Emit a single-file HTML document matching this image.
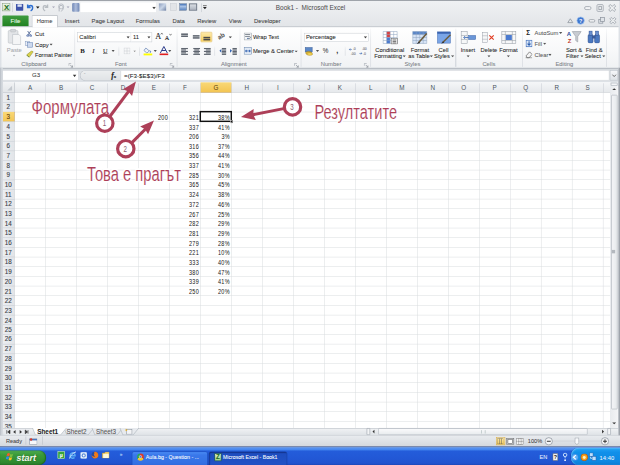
<!DOCTYPE html><html><head><meta charset="utf-8"><style>
html,body{margin:0;padding:0;width:620px;height:465px;overflow:hidden;background:#dde1e6}
#r{position:absolute;left:0;top:0;width:1280px;height:960px;transform:scale(0.484375);transform-origin:0 0;font-family:"Liberation Sans",sans-serif;overflow:hidden}
#r div{box-sizing:border-box;-webkit-text-stroke:0.12px currentColor}

</style></head><body><div id="r">
<div style="position:absolute;left:0.0px;top:0.0px;width:1280.0px;height:960.0px;background:#dde1e6;"></div>
<div style="position:absolute;left:0.0px;top:0.0px;width:1280.0px;height:1.7px;background:#9a9fa6;"></div>
<div style="position:absolute;left:1.7px;top:1.7px;width:1276.2px;height:29.3px;background:linear-gradient(#eff1f3,#e8eaed);"></div>
<div style="position:absolute;left:5.4px;top:6.6px;width:15.9px;height:16.1px;background:linear-gradient(#e9f3e3,#cfe3c6);border:1px solid #7d9a74;box-sizing:border-box;"><div style="position:absolute;left:2px;top:-1px;font:bold 16px Liberation Sans;color:#1f6f1f;line-height:18px">X</div></div>
<div style="position:absolute;left:25.4px;top:6.2px;width:1.0px;height:18.6px;background:#b9bfc7;"></div>
<div style="position:absolute;left:32.6px;top:8.1px;width:15.3px;height:13.8px;background:#3d52a8;border-radius:1px;"><div style="position:absolute;left:3px;top:1px;width:9px;height:5px;background:#dbe3f5"></div></div>
<svg style="position:absolute;left:53.7px;top:6.2px" width="16.5" height="18.6" viewBox="0 0 16 18"><path d="M3 3 L3 9 L9 9 M3 9 C6 4 13 3 13 10 C13 13 11 15 9 16" fill="none" stroke="#2e6fd0" stroke-width="3"/></svg>
<svg style="position:absolute;left:74.3px;top:13.4px" width="8" height="5" viewBox="0 0 8 5"><path d="M0 0 L8 0 L4 5Z" fill="#222"/></svg>
<svg style="position:absolute;left:86.7px;top:6.2px" width="14.5" height="18.6" viewBox="0 0 14 18"><path d="M11 3 L11 9 L5 9 M11 9 C8 4 2 4 2 10 C2 13 4 15 6 16" fill="none" stroke="#b7bcc2" stroke-width="2.5"/></svg>
<svg style="position:absolute;left:106.5px;top:13.4px" width="7" height="4" viewBox="0 0 8 5"><path d="M0 0 L8 0 L4 5Z" fill="#aab"/></svg>
<svg style="position:absolute;left:117.3px;top:5.8px" width="17.5" height="19.6" viewBox="0 0 17 19"><path d="M5 17 L5 8 C5 4 13 4 13 8 L13 12 C13 15 9 15 9 17" fill="none" stroke="#b3b8bf" stroke-width="2"/><circle cx="9" cy="7" r="5" fill="none" stroke="#b3b8bf" stroke-width="1.6"/></svg>
<svg style="position:absolute;left:136.7px;top:13.4px" width="7" height="4" viewBox="0 0 8 5"><path d="M0 0 L8 0 L4 5Z" fill="#aab"/></svg>
<div style="position:absolute;left:148.6px;top:5.8px;width:15.3px;height:17.9px;background:linear-gradient(90deg,#6e86b5,#aebddb,#6e86b5);border-radius:2px;"></div>
<div style="position:absolute;left:166.4px;top:4.7px;width:155.9px;height:20.7px;background:#fff;"></div>
<svg style="position:absolute;left:313.8px;top:14.0px" width="8" height="5" viewBox="0 0 8 5"><path d="M0 0 L8 0 L4 5Z" fill="#444"/></svg>
<div style="position:absolute;left:328.3px;top:7.2px;width:14.4px;height:14.7px;background:linear-gradient(135deg,#8a9cbc,#c8d4e6,#6d80a3);"></div>
<div style="position:absolute;left:351.0px;top:7.2px;width:14.4px;height:14.7px;background:#e2e4e7;border:1px solid #c8ccd1;box-sizing:border-box;"></div>
<div style="position:absolute;left:369.5px;top:7.2px;width:16.6px;height:14.7px;background:linear-gradient(#3f6fb5,#a9c2e6 40%,#5a84c0);border:1px solid #5a6f90;box-sizing:border-box;"></div>
<div style="position:absolute;left:390.2px;top:7.2px;width:16.5px;height:14.7px;background:linear-gradient(#d9dde3,#aeb5bf);border:2px solid #6d7684;box-sizing:border-box;"></div>
<div style="position:absolute;left:414.6px;top:7.2px;width:1.0px;height:17.6px;background:#b7bdc5;"></div>
<svg style="position:absolute;left:419.1px;top:11.4px" width="8" height="9" viewBox="0 0 8 9"><rect x="0" y="0" width="8" height="1.6" fill="#222"/><path d="M0 3.5 L8 3.5 L4 8Z" fill="#222"/></svg>
<div style="position:absolute;left:569.4px;top:7.7px;line-height:15.96px;font-size:13.3px;color:#4a4a4a;white-space:nowrap;-webkit-text-stroke:0">Book1 -&nbsp; Microsoft Excel</div>
<svg style="position:absolute;left:0;top:0;z-index:5" width="1280" height="70" viewBox="0 0 1280 70"><rect x="1206.9" y="13.6" width="13.2" height="6.2" rx="3" fill="#f3f4f6" stroke="#9aa1aa" stroke-width="1.6"/><rect x="1232.5" y="9.5" width="12.8" height="14.0" rx="2" fill="#eef0f2" stroke="#9aa1aa" stroke-width="1.6"/><rect x="1236.4" y="13.0" width="5.0" height="7.0" fill="none" stroke="#8a919a" stroke-width="1.4"/><path d="M1256.7 12.5 L1259.9 9.3 L1263.9 13.3 L1267.9 9.3 L1271.1 12.5 L1267.1 16.5 L1271.1 20.5 L1267.9 23.7 L1263.9 19.7 L1259.9 23.7 L1256.7 20.5 L1260.7 16.5Z" fill="#eef0f2" stroke="#8f969f" stroke-width="1.5"/><path d="M1172.2 46.7 L1177.4 38.8 L1182.6 46.7Z" fill="none" stroke="#8e959e" stroke-width="1.6"/><circle cx="1198.7" cy="42.5" r="7.6" fill="#3f77cf" stroke="#a7c6ef" stroke-width="1.5"/><text x="1198.7" y="46.5" font-size="11" font-weight="bold" fill="#fff" text-anchor="middle" font-family="Liberation Sans">?</text><rect x="1216.0" y="40.5" width="12.0" height="5.0" rx="2.5" fill="#f3f4f6" stroke="#8f969f" stroke-width="1.5"/><rect x="1236.2" y="40.1" width="8.3" height="7.8" fill="#dfe3e8" stroke="#8f969f" stroke-width="1.5"/><rect x="1239.9" y="36.3" width="8.3" height="7.8" fill="#dfe3e8" stroke="#8f969f" stroke-width="1.5"/><path d="M1258.9 39.0 L1261.8 36.1 L1265.3 39.6 L1268.8 36.1 L1271.7 39.0 L1268.2 42.5 L1271.7 46.0 L1268.8 48.9 L1265.3 45.4 L1261.8 48.9 L1258.9 46.0 L1262.4 42.5Z" fill="#eef0f2" stroke="#8f969f" stroke-width="1.4"/></svg>
<div style="position:absolute;left:1.7px;top:31.0px;width:1276.2px;height:24.7px;background:linear-gradient(#e8eaed,#e2e5e8);"></div>
<div style="position:absolute;left:4.7px;top:32.0px;width:54.6px;height:23.3px;background:linear-gradient(#3f9c3f,#208020);border-radius:2px 2px 0 0;"></div>
<div style="position:absolute;left:-268.0px;width:600px;text-align:center;top:36.5px;line-height:15.0px;font-size:12.5px;color:#f2fff2;white-space:nowrap;">File</div>
<div style="position:absolute;left:65.0px;top:31.4px;width:54.7px;height:25.6px;z-index:2;background:linear-gradient(#ffffff,#fdfdfe);border:2px solid #c6cacf;border-bottom:none;border-radius:3px 3px 0 0;box-sizing:border-box;"></div>
<div style="position:absolute;left:-207.9px;width:600px;text-align:center;top:37.0px;line-height:14.399999999999999px;font-size:12px;color:#3c3c3c;white-space:nowrap;z-index:3;">Home</div>
<div style="position:absolute;left:-151.4px;width:600px;text-align:center;top:37.0px;line-height:14.399999999999999px;font-size:12px;color:#3c3c3c;white-space:nowrap;z-index:3;">Insert</div>
<div style="position:absolute;left:-77.3px;width:600px;text-align:center;top:37.0px;line-height:14.399999999999999px;font-size:12px;color:#3c3c3c;white-space:nowrap;z-index:3;">Page Layout</div>
<div style="position:absolute;left:5.3px;width:600px;text-align:center;top:37.0px;line-height:14.399999999999999px;font-size:12px;color:#3c3c3c;white-space:nowrap;z-index:3;">Formulas</div>
<div style="position:absolute;left:68.9px;width:600px;text-align:center;top:37.0px;line-height:14.399999999999999px;font-size:12px;color:#3c3c3c;white-space:nowrap;z-index:3;">Data</div>
<div style="position:absolute;left:126.8px;width:600px;text-align:center;top:37.0px;line-height:14.399999999999999px;font-size:12px;color:#3c3c3c;white-space:nowrap;z-index:3;">Review</div>
<div style="position:absolute;left:185.4px;width:600px;text-align:center;top:37.0px;line-height:14.399999999999999px;font-size:12px;color:#3c3c3c;white-space:nowrap;z-index:3;">View</div>
<div style="position:absolute;left:251.9px;width:600px;text-align:center;top:37.0px;line-height:14.399999999999999px;font-size:12px;color:#3c3c3c;white-space:nowrap;z-index:3;">Developer</div>
<div style="position:absolute;left:3.1px;top:54.3px;width:1273.8px;height:85.5px;background:linear-gradient(#ffffff,#f7f8f9 60%,#f0f2f4);border-top:2px solid #c6cacf;box-sizing:border-box;"></div>
<div style="position:absolute;left:0.0px;top:139.8px;width:1280.0px;height:3.7px;background:#b9bec5;"></div>
<svg style="position:absolute;left:14.9px;top:58.8px" width="28.9" height="34.1" viewBox="0 0 29 34"><rect x="2" y="4" width="20" height="26" rx="2" fill="#e3e5e8" stroke="#c3c7cc" stroke-width="1.5"/><rect x="7" y="1" width="10" height="6" rx="1" fill="#d3d6da" stroke="#b9bdc2"/><path d="M11 12 L24 12 L28 16 L28 33 L11 33Z" fill="#f4f5f6" stroke="#c1c5ca" stroke-width="1.5"/></svg>
<div style="position:absolute;left:-270.7px;width:600px;text-align:center;top:96.4px;line-height:14.399999999999999px;font-size:12px;color:#a5a8ad;white-space:nowrap;">Paste</div>
<svg style="position:absolute;left:25.9px;top:113.2px" width="6" height="3.5" viewBox="0 0 8 5"><path d="M0 0 L8 0 L4 5Z" fill="#b0b3b8"/></svg>
<svg style="position:absolute;left:53.7px;top:63.0px" width="12.4" height="13.4" viewBox="0 0 12 13"><path d="M3 1 L9 10 M9 1 L3 10" stroke="#5a6f98" stroke-width="1.8"/><circle cx="3" cy="10.5" r="2" fill="none" stroke="#3a5aa0" stroke-width="1.5"/><circle cx="9" cy="10.5" r="2" fill="none" stroke="#3a5aa0" stroke-width="1.5"/></svg>
<div style="position:absolute;left:72.3px;top:62.6px;line-height:14.399999999999999px;font-size:12px;color:#262626;white-space:nowrap;">Cut</div>
<svg style="position:absolute;left:51.2px;top:84.2px" width="17.5" height="14.5" viewBox="0 0 17 14"><rect x="1" y="1" width="9" height="9" fill="#e8eef8" stroke="#7d93b8"/><rect x="6" y="4" width="10" height="9" fill="#cdd9ee" stroke="#5f7fb2"/></svg>
<div style="position:absolute;left:72.3px;top:84.5px;line-height:14.399999999999999px;font-size:12px;color:#262626;white-space:nowrap;">Copy</div>
<svg style="position:absolute;left:101.8px;top:89.8px" width="7" height="4.5" viewBox="0 0 8 5"><path d="M0 0 L8 0 L4 5Z" fill="#555"/></svg>
<svg style="position:absolute;left:53.3px;top:104.3px" width="16.5" height="16.5" viewBox="0 0 16 16"><path d="M2 9 L7 14 L15 3 L12 1Z" fill="#d9d24a" stroke="#8a8a30" stroke-width="1"/><path d="M3 10 L6 13" stroke="#5a7a30" stroke-width="2"/></svg>
<div style="position:absolute;left:72.3px;top:107.0px;line-height:13.92px;font-size:11.6px;color:#262626;white-space:nowrap;">Format Painter</div>
<div style="position:absolute;left:-230.2px;width:600px;text-align:center;top:125.8px;line-height:14.399999999999999px;font-size:12px;color:#7b7f86;white-space:nowrap;">Clipboard</div>
<svg style="position:absolute;left:140.5px;top:129.6px" width="10" height="10" viewBox="0 0 10 10"><path d="M1 1 L6 1 M1 1 L1 6" stroke="#9aa0a8" stroke-width="1.2" fill="none"/><path d="M4 4 L9 9 M9 5 L9 9 L5 9" stroke="#7a818a" stroke-width="1.3" fill="none"/></svg>
<div style="position:absolute;left:153.8px;top:58.8px;width:1.2px;height:79.5px;background:linear-gradient(rgba(200,205,212,0.2),#d3d7dd 30%,#c9ced5);"></div>
<div style="position:absolute;left:159.6px;top:66.7px;width:111.5px;height:20.8px;background:#fff;border:1px solid #c6cbd1;"></div>
<div style="position:absolute;left:271.1px;top:66.7px;width:42.7px;height:20.8px;background:#fff;border:1px solid #c6cbd1;border-left:none;"></div>
<div style="position:absolute;left:163.7px;top:69.8px;line-height:14.399999999999999px;font-size:12px;color:#262626;white-space:nowrap;">Calibri</div>
<svg style="position:absolute;left:261.2px;top:75.2px" width="7" height="4.5" viewBox="0 0 8 5"><path d="M0 0 L8 0 L4 5Z" fill="#444"/></svg>
<div style="position:absolute;left:274.6px;top:69.8px;line-height:14.399999999999999px;font-size:12px;color:#262626;white-space:nowrap;">11</div>
<svg style="position:absolute;left:304.1px;top:75.2px" width="7" height="4.5" viewBox="0 0 8 5"><path d="M0 0 L8 0 L4 5Z" fill="#444"/></svg>
<div style="position:absolute;left:320.4px;top:66.5px;font-size:17px;line-height:18px;color:#222;font-family:Liberation Serif;-webkit-text-stroke:0.2px">A</div>
<svg style="position:absolute;left:330.9px;top:67.3px" width="6" height="5" viewBox="0 0 6 5"><path d="M0.5 4.5 L3 1 L5.5 4.5" stroke="#333" stroke-width="1.2" fill="none"/></svg>
<div style="position:absolute;left:340.2px;top:71.8px;font-size:13px;line-height:14px;color:#222;font-family:Liberation Serif;-webkit-text-stroke:0.2px">A</div>
<svg style="position:absolute;left:348.9px;top:68.5px" width="6" height="5" viewBox="0 0 6 5"><path d="M0.5 0.5 L3 4 L5.5 0.5" stroke="#333" stroke-width="1.2" fill="none"/></svg>
<div style="position:absolute;left:165.8px;top:96.5px;line-height:16.8px;font-size:14px;color:#222;white-space:nowrap;font-family:Liberation Serif"><b>B</b></div>
<div style="position:absolute;left:190.6px;top:96.5px;line-height:16.8px;font-size:14px;color:#222;white-space:nowrap;font-family:Liberation Serif"><i>I</i></div>
<div style="position:absolute;left:212.6px;top:97.1px;line-height:15.6px;font-size:13px;color:#222;white-space:nowrap;font-family:Liberation Serif"><u>U</u></div>
<svg style="position:absolute;left:229.8px;top:103.0px" width="7" height="4.5" viewBox="0 0 8 5"><path d="M0 0 L8 0 L4 5Z" fill="#555"/></svg>
<div style="position:absolute;left:244.6px;top:96.0px;width:1.3px;height:18.6px;background:linear-gradient(rgba(200,205,212,0.2),#d3d7dd 30%,#c9ced5);"></div>
<svg style="position:absolute;left:254.6px;top:97.7px" width="14.5" height="14.5" viewBox="0 0 14 14"><rect x="1" y="1" width="12" height="12" fill="none" stroke="#c4c8cd" stroke-width="1"/><path d="M7 1 L7 13 M1 7 L13 7" stroke="#c4c8cd"/></svg>
<svg style="position:absolute;left:274.7px;top:103.5px" width="6" height="3.5" viewBox="0 0 8 5"><path d="M0 0 L8 0 L4 5Z" fill="#666"/></svg>
<div style="position:absolute;left:288.0px;top:96.0px;width:1.2px;height:18.6px;background:linear-gradient(rgba(200,205,212,0.2),#d3d7dd 30%,#c9ced5);"></div>
<svg style="position:absolute;left:296.3px;top:96.0px" width="18.6" height="18.6" viewBox="0 0 18 18"><path d="M5 3 L12 9 L7 13 L1 8Z" fill="#eef2f8" stroke="#5c7cb0" stroke-width="1.3"/><path d="M13 8 C15 10 15 12 13 12" stroke="#3a6ab8" stroke-width="1.8" fill="none"/><rect x="0" y="14" width="18" height="4" fill="#ffff00"/></svg>
<svg style="position:absolute;left:316.9px;top:103.0px" width="7" height="4.5" viewBox="0 0 8 5"><path d="M0 0 L8 0 L4 5Z" fill="#555"/></svg>
<svg style="position:absolute;left:329.3px;top:94.6px" width="18.6" height="19.6" viewBox="0 0 18 19"><path d="M2 14 L9 1 L16 14 M5 9 L13 9" stroke="#2a3a8a" stroke-width="2" fill="none"/><rect x="0" y="15" width="18" height="4" fill="#e02020"/></svg>
<svg style="position:absolute;left:346.6px;top:103.0px" width="7" height="4.5" viewBox="0 0 8 5"><path d="M0 0 L8 0 L4 5Z" fill="#555"/></svg>
<div style="position:absolute;left:-50.6px;width:600px;text-align:center;top:125.8px;line-height:14.399999999999999px;font-size:12px;color:#7b7f86;white-space:nowrap;">Font</div>
<svg style="position:absolute;left:349.7px;top:129.6px" width="10" height="10" viewBox="0 0 10 10"><path d="M1 1 L6 1 M1 1 L1 6" stroke="#9aa0a8" stroke-width="1.2" fill="none"/><path d="M4 4 L9 9 M9 5 L9 9 L5 9" stroke="#7a818a" stroke-width="1.3" fill="none"/></svg>
<div style="position:absolute;left:364.8px;top:58.8px;width:1.2px;height:79.5px;background:linear-gradient(rgba(200,205,212,0.2),#d3d7dd 30%,#c9ced5);"></div>
<div style="position:absolute;left:414.3px;top:65.7px;width:23.8px;height:21.4px;background:linear-gradient(#fde9a8,#f8cf5e);border:1px solid #e0b548;border-radius:2px;"></div>
<svg style="position:absolute;left:373.3px;top:68.1px" width="16" height="16" viewBox="0 0 16 16"><rect x="1" y="1" width="14" height="3.2" fill="#5f6670"/><rect x="1" y="5.2" width="14" height="3.2" fill="#5f6670"/></svg>
<svg style="position:absolute;left:397.2px;top:69.0px" width="16" height="16" viewBox="0 0 16 16"><rect x="1" y="3.5" width="14" height="3.2" fill="#5f6670"/><rect x="1" y="7.7" width="14" height="3.2" fill="#5f6670"/></svg>
<svg style="position:absolute;left:418.7px;top:69.4px" width="16" height="16" viewBox="0 0 16 16"><rect x="1" y="7" width="14" height="3.2" fill="#4a4a4a"/><rect x="1" y="11.2" width="14" height="3.2" fill="#4a4a4a"/></svg>
<div style="position:absolute;left:449.0px;top:67.1px;font-size:13px;line-height:16px;color:#555;transform:rotate(-30deg);font-weight:bold">ab</div>
<svg style="position:absolute;left:472.2px;top:74.5px" width="7" height="4.5" viewBox="0 0 8 5"><path d="M0 0 L8 0 L4 5Z" fill="#555"/></svg>
<svg style="position:absolute;left:373.3px;top:97.9px" width="16" height="16" viewBox="0 0 16 16"><rect x="1" y="1" width="14" height="2.4" fill="#5f6670"/><rect x="1" y="4" width="10" height="2.4" fill="#5f6670"/><rect x="1" y="7" width="14" height="2.4" fill="#5f6670"/><rect x="1" y="10" width="10" height="2.4" fill="#5f6670"/><rect x="1" y="13" width="14" height="2.4" fill="#5f6670"/></svg>
<svg style="position:absolute;left:397.6px;top:97.9px" width="16" height="16" viewBox="0 0 16 16"><rect x="1" y="1" width="14" height="2.4" fill="#5f6670"/><rect x="3" y="4" width="10" height="2.4" fill="#5f6670"/><rect x="1" y="7" width="14" height="2.4" fill="#5f6670"/><rect x="3" y="10" width="10" height="2.4" fill="#5f6670"/><rect x="1" y="13" width="14" height="2.4" fill="#5f6670"/></svg>
<svg style="position:absolute;left:420.3px;top:97.9px" width="16" height="16" viewBox="0 0 16 16"><rect x="1" y="1" width="14" height="2.4" fill="#5f6670"/><rect x="5" y="4" width="10" height="2.4" fill="#5f6670"/><rect x="1" y="7" width="14" height="2.4" fill="#5f6670"/><rect x="5" y="10" width="10" height="2.4" fill="#5f6670"/><rect x="1" y="13" width="14" height="2.4" fill="#5f6670"/></svg>
<div style="position:absolute;left:443.0px;top:96.0px;width:1.3px;height:18.6px;background:linear-gradient(rgba(200,205,212,0.2),#d3d7dd 30%,#c9ced5);"></div>
<svg style="position:absolute;left:451.7px;top:97.9px" width="16" height="16" viewBox="0 0 16 16"><rect x="6" y="1" width="9" height="2.4" fill="#5f6670"/><rect x="6" y="4" width="9" height="2.4" fill="#5f6670"/><rect x="6" y="7" width="9" height="2.4" fill="#5f6670"/><rect x="6" y="10" width="9" height="2.4" fill="#5f6670"/><rect x="6" y="13" width="9" height="2.4" fill="#5f6670"/></svg>
<svg style="position:absolute;left:451.7px;top:100.1px" width="6" height="10" viewBox="0 0 6 10"><path d="M5 1 L1 5 L5 9Z" fill="#2d5fae"/></svg>
<svg style="position:absolute;left:474.4px;top:97.9px" width="16" height="16" viewBox="0 0 16 16"><rect x="6" y="1" width="9" height="2.4" fill="#5f6670"/><rect x="6" y="4" width="9" height="2.4" fill="#5f6670"/><rect x="6" y="7" width="9" height="2.4" fill="#5f6670"/><rect x="6" y="10" width="9" height="2.4" fill="#5f6670"/><rect x="6" y="13" width="9" height="2.4" fill="#5f6670"/></svg>
<svg style="position:absolute;left:474.4px;top:100.1px" width="6" height="10" viewBox="0 0 6 10"><path d="M1 1 L5 5 L1 9Z" fill="#2d5fae"/></svg>
<div style="position:absolute;left:494.5px;top:58.8px;width:1.2px;height:79.5px;background:linear-gradient(rgba(200,205,212,0.2),#d3d7dd 30%,#c9ced5);"></div>
<svg style="position:absolute;left:503.3px;top:67.3px" width="17.5" height="16.5" viewBox="0 0 17 16"><rect x="1" y="1" width="15" height="14" fill="#f4f6f8" stroke="#8f979f"/><path d="M3 4 L13 4 M3 8 L12 8 C14 8 14 12 12 12 L8 12" stroke="#5a6470" stroke-width="1.5" fill="none"/><path d="M9 10 L7 12 L9 14Z" fill="#2d5fae"/></svg>
<div style="position:absolute;left:522.3px;top:68.8px;line-height:14.399999999999999px;font-size:12px;color:#262626;white-space:nowrap;">Wrap Text</div>
<svg style="position:absolute;left:503.3px;top:96.6px" width="17.5" height="16.5" viewBox="0 0 17 16"><rect x="1" y="1" width="15" height="14" fill="#dfe8f4" stroke="#5f7fa8"/><path d="M3 8 L14 8" stroke="#2d5fae" stroke-width="1.5"/><path d="M3 8 L6 5 L6 11Z M14 8 L11 5 L11 11Z" fill="#2d5fae"/></svg>
<div style="position:absolute;left:522.3px;top:98.1px;line-height:14.399999999999999px;font-size:12px;color:#262626;white-space:nowrap;">Merge &amp; Center</div>
<svg style="position:absolute;left:607.6px;top:103.5px" width="7" height="4.5" viewBox="0 0 8 5"><path d="M0 0 L8 0 L4 5Z" fill="#555"/></svg>
<div style="position:absolute;left:182.7px;width:600px;text-align:center;top:125.8px;line-height:14.399999999999999px;font-size:12px;color:#7b7f86;white-space:nowrap;">Alignment</div>
<svg style="position:absolute;left:606.5px;top:129.6px" width="10" height="10" viewBox="0 0 10 10"><path d="M1 1 L6 1 M1 1 L1 6" stroke="#9aa0a8" stroke-width="1.2" fill="none"/><path d="M4 4 L9 9 M9 5 L9 9 L5 9" stroke="#7a818a" stroke-width="1.3" fill="none"/></svg>
<div style="position:absolute;left:620.6px;top:58.8px;width:1.2px;height:79.5px;background:linear-gradient(rgba(200,205,212,0.2),#d3d7dd 30%,#c9ced5);"></div>
<div style="position:absolute;left:627.6px;top:67.9px;width:133.0px;height:18.6px;background:#fff;border:1px solid #c6cbd1;"></div>
<div style="position:absolute;left:631.7px;top:69.8px;line-height:14.399999999999999px;font-size:12px;color:#262626;white-space:nowrap;">Percentage</div>
<svg style="position:absolute;left:751.3px;top:75.2px" width="7" height="4.5" viewBox="0 0 8 5"><path d="M0 0 L8 0 L4 5Z" fill="#444"/></svg>
<svg style="position:absolute;left:629.3px;top:96.0px" width="19.6" height="18.6" viewBox="0 0 19 18"><rect x="1" y="2" width="14" height="9" fill="#5b87c6" stroke="#3a5f98"/><ellipse cx="8" cy="13" rx="6" ry="3" fill="#e8c340" stroke="#a5821a"/><ellipse cx="10" cy="15" rx="6" ry="3" fill="#f0d050" stroke="#a5821a"/></svg>
<svg style="position:absolute;left:651.8px;top:103.0px" width="7" height="4.5" viewBox="0 0 8 5"><path d="M0 0 L8 0 L4 5Z" fill="#555"/></svg>
<div style="position:absolute;left:666.4px;top:97.5px;line-height:15.6px;font-size:13px;color:#444;white-space:nowrap;">%</div>
<div style="position:absolute;left:694.1px;top:96.3px;line-height:18.0px;font-size:15px;color:#333;white-space:nowrap;"><b>,</b></div>
<div style="position:absolute;left:712.3px;top:96.0px;width:1.2px;height:18.6px;background:linear-gradient(rgba(200,205,212,0.2),#d3d7dd 30%,#c9ced5);"></div>
<svg style="position:absolute;left:719.5px;top:96.6px" width="18.6" height="17.5" viewBox="0 0 18 17"><text x="8" y="7" font-size="7" fill="#444" font-family="Liberation Sans">.0</text><text x="4" y="16" font-size="7" fill="#444" font-family="Liberation Sans">.00</text><path d="M1 5 L6 5 M1 5 L3 3 M1 5 L3 7" stroke="#2d5fae" stroke-width="1.2" fill="none"/></svg>
<svg style="position:absolute;left:741.2px;top:96.6px" width="18.6" height="17.5" viewBox="0 0 18 17"><text x="6" y="7" font-size="7" fill="#444" font-family="Liberation Sans">.00</text><text x="8" y="16" font-size="7" fill="#444" font-family="Liberation Sans">.0</text><path d="M1 13 L6 13 M6 13 L4 11 M6 13 L4 15" stroke="#2d5fae" stroke-width="1.2" fill="none"/></svg>
<div style="position:absolute;left:383.4px;width:600px;text-align:center;top:125.8px;line-height:14.399999999999999px;font-size:12px;color:#7b7f86;white-space:nowrap;">Number</div>
<svg style="position:absolute;left:750.6px;top:129.6px" width="10" height="10" viewBox="0 0 10 10"><path d="M1 1 L6 1 M1 1 L1 6" stroke="#9aa0a8" stroke-width="1.2" fill="none"/><path d="M4 4 L9 9 M9 5 L9 9 L5 9" stroke="#7a818a" stroke-width="1.3" fill="none"/></svg>
<div style="position:absolute;left:765.1px;top:58.8px;width:1.2px;height:79.5px;background:linear-gradient(rgba(200,205,212,0.2),#d3d7dd 30%,#c9ced5);"></div>
<svg style="position:absolute;left:788.6px;top:63.2px" width="33.0" height="28.9" viewBox="0 0 32 28"><rect x="2" y="2" width="28" height="24" fill="#fff"/><rect x="9" y="2" width="7" height="12" fill="#d94040"/><rect x="9" y="14" width="7" height="12" fill="#4a7ad0"/><path d="M2 2 L30 2" stroke="#8ea3c0" stroke-width="1"/><path d="M2 8 L30 8" stroke="#8ea3c0" stroke-width="1"/><path d="M2 14 L30 14" stroke="#8ea3c0" stroke-width="1"/><path d="M2 20 L30 20" stroke="#8ea3c0" stroke-width="1"/><path d="M2 26 L30 26" stroke="#8ea3c0" stroke-width="1"/><path d="M2 2 L2 26" stroke="#8ea3c0" stroke-width="1"/><path d="M9 2 L9 26" stroke="#8ea3c0" stroke-width="1"/><path d="M16 2 L16 26" stroke="#8ea3c0" stroke-width="1"/><path d="M23 2 L23 26" stroke="#8ea3c0" stroke-width="1"/><path d="M30 2 L30 26" stroke="#8ea3c0" stroke-width="1"/><rect x="18" y="16" width="13" height="11" fill="#eee" stroke="#555"/><path d="M21 19 L28 19 M21 22 L28 22 M21 25 L28 25" stroke="#333" stroke-width="1.2"/></svg>
<div style="position:absolute;left:504.7px;width:600px;text-align:center;top:95.6px;line-height:14.399999999999999px;font-size:12px;color:#262626;white-space:nowrap;">Conditional</div>
<div style="position:absolute;left:501.4px;width:600px;text-align:center;top:108.8px;line-height:14.399999999999999px;font-size:12px;color:#262626;white-space:nowrap;">Formatting</div>
<svg style="position:absolute;left:830.6px;top:114.2px" width="7" height="4.5" viewBox="0 0 8 5"><path d="M0 0 L8 0 L4 5Z" fill="#555"/></svg>
<svg style="position:absolute;left:848.5px;top:63.2px" width="35.1" height="28.9" viewBox="0 0 32 28"><rect x="2" y="2" width="28" height="24" fill="#d6e3f5"/><rect x="2" y="2" width="28" height="6" fill="#5a86c8"/><path d="M2 2 L30 2" stroke="#8ea3c0" stroke-width="1"/><path d="M2 8 L30 8" stroke="#8ea3c0" stroke-width="1"/><path d="M2 14 L30 14" stroke="#8ea3c0" stroke-width="1"/><path d="M2 20 L30 20" stroke="#8ea3c0" stroke-width="1"/><path d="M2 26 L30 26" stroke="#8ea3c0" stroke-width="1"/><path d="M2 2 L2 26" stroke="#8ea3c0" stroke-width="1"/><path d="M9 2 L9 26" stroke="#8ea3c0" stroke-width="1"/><path d="M16 2 L16 26" stroke="#8ea3c0" stroke-width="1"/><path d="M23 2 L23 26" stroke="#8ea3c0" stroke-width="1"/><path d="M30 2 L30 26" stroke="#8ea3c0" stroke-width="1"/><path d="M30 6 L14 24" stroke="#6a5a3a" stroke-width="3"/><path d="M14 22 L10 27 L17 25Z" fill="#333"/></svg>
<div style="position:absolute;left:567.1px;width:600px;text-align:center;top:95.6px;line-height:14.399999999999999px;font-size:12px;color:#262626;white-space:nowrap;">Format</div>
<div style="position:absolute;left:565.0px;width:600px;text-align:center;top:108.8px;line-height:14.399999999999999px;font-size:12px;color:#262626;white-space:nowrap;">as Table</div>
<svg style="position:absolute;left:887.1px;top:114.2px" width="7" height="4.5" viewBox="0 0 8 5"><path d="M0 0 L8 0 L4 5Z" fill="#555"/></svg>
<svg style="position:absolute;left:900.7px;top:63.2px" width="31.0" height="28.9" viewBox="0 0 32 28"><rect x="2" y="2" width="28" height="24" fill="#7aa5e6" stroke="#4a6fb0"/><rect x="2" y="2" width="28" height="4" fill="#3a64b0"/><path d="M30 8 L14 24" stroke="#6a5a3a" stroke-width="3"/><path d="M14 22 L10 27 L17 25Z" fill="#333"/></svg>
<div style="position:absolute;left:615.6px;width:600px;text-align:center;top:95.6px;line-height:14.399999999999999px;font-size:12px;color:#262626;white-space:nowrap;">Cell</div>
<div style="position:absolute;left:612.5px;width:600px;text-align:center;top:108.8px;line-height:14.399999999999999px;font-size:12px;color:#262626;white-space:nowrap;">Styles</div>
<svg style="position:absolute;left:930.5px;top:114.2px" width="7" height="4.5" viewBox="0 0 8 5"><path d="M0 0 L8 0 L4 5Z" fill="#555"/></svg>
<div style="position:absolute;left:551.4px;width:600px;text-align:center;top:125.8px;line-height:14.399999999999999px;font-size:12px;color:#7b7f86;white-space:nowrap;">Styles</div>
<div style="position:absolute;left:940.4px;top:58.8px;width:1.2px;height:79.5px;background:linear-gradient(rgba(200,205,212,0.2),#d3d7dd 30%,#c9ced5);"></div>
<svg style="position:absolute;left:949.7px;top:63.2px" width="33.0" height="28.9" viewBox="0 0 32 28"><rect x="2" y="2" width="12" height="24" fill="#f6f7f8" stroke="#8d95a0"/><path d="M2 10 L14 10 M2 18 L14 18" stroke="#8d95a0"/><rect x="17" y="10" width="14" height="8" fill="#6a96d8" stroke="#3a64a8"/><path d="M17 14 L8 14 M10 11 L7 14 L10 17" stroke="#2d5fae" stroke-width="1.5" fill="none"/></svg>
<div style="position:absolute;left:666.0px;width:600px;text-align:center;top:95.6px;line-height:14.399999999999999px;font-size:12px;color:#262626;white-space:nowrap;">Insert</div>
<svg style="position:absolute;left:962.5px;top:114.2px" width="7" height="4.5" viewBox="0 0 8 5"><path d="M0 0 L8 0 L4 5Z" fill="#555"/></svg>
<svg style="position:absolute;left:993.9px;top:63.2px" width="28.9" height="28.9" viewBox="0 0 32 28"><rect x="2" y="2" width="12" height="24" fill="#f6f7f8" stroke="#8d95a0"/><path d="M2 10 L14 10 M2 18 L14 18" stroke="#8d95a0"/><path d="M18 9 L28 19 M28 9 L18 19" stroke="#e03a20" stroke-width="2.5"/></svg>
<div style="position:absolute;left:709.3px;width:600px;text-align:center;top:95.6px;line-height:14.399999999999999px;font-size:12px;color:#262626;white-space:nowrap;">Delete</div>
<svg style="position:absolute;left:1005.8px;top:114.2px" width="7" height="4.5" viewBox="0 0 8 5"><path d="M0 0 L8 0 L4 5Z" fill="#555"/></svg>
<svg style="position:absolute;left:1033.5px;top:63.2px" width="33.0" height="28.9" viewBox="0 0 32 28"><rect x="2" y="2" width="28" height="24" fill="#f6f7f8" stroke="#8d95a0"/><path d="M2 8 L30 8 M2 20 L30 20 M9 2 L9 26 M23 2 L23 26" stroke="#8d95a0"/><rect x="10" y="9" width="12" height="10" fill="#4a7ad0"/></svg>
<div style="position:absolute;left:749.8px;width:600px;text-align:center;top:95.6px;line-height:14.399999999999999px;font-size:12px;color:#262626;white-space:nowrap;">Format</div>
<svg style="position:absolute;left:1046.3px;top:114.2px" width="7" height="4.5" viewBox="0 0 8 5"><path d="M0 0 L8 0 L4 5Z" fill="#555"/></svg>
<div style="position:absolute;left:709.3px;width:600px;text-align:center;top:125.8px;line-height:14.399999999999999px;font-size:12px;color:#7b7f86;white-space:nowrap;">Cells</div>
<div style="position:absolute;left:1077.7px;top:58.8px;width:1.2px;height:79.5px;background:linear-gradient(rgba(200,205,212,0.2),#d3d7dd 30%,#c9ced5);"></div>
<div style="position:absolute;left:1086.3px;top:60.3px;line-height:15.6px;font-size:13px;color:#222;white-space:nowrap;"><b>&Sigma;</b></div>
<div style="position:absolute;left:1103.5px;top:60.9px;line-height:14.399999999999999px;font-size:12px;color:#5a5a5a;white-space:nowrap;">AutoSum</div>
<svg style="position:absolute;left:1153.7px;top:66.2px" width="7" height="4.5" viewBox="0 0 8 5"><path d="M0 0 L8 0 L4 5Z" fill="#555"/></svg>
<svg style="position:absolute;left:1084.5px;top:82.2px" width="14.5" height="15.5" viewBox="0 0 14 15"><rect x="1" y="1" width="12" height="13" fill="#dce8f8" stroke="#3a6ab8" stroke-width="1.5"/><path d="M7 3 L7 11 M4 8 L7 11 L10 8" stroke="#2d5fae" stroke-width="2" fill="none"/></svg>
<div style="position:absolute;left:1103.5px;top:82.6px;line-height:14.399999999999999px;font-size:12px;color:#5a5a5a;white-space:nowrap;">Fill</div>
<svg style="position:absolute;left:1121.2px;top:88.0px" width="7" height="4.5" viewBox="0 0 8 5"><path d="M0 0 L8 0 L4 5Z" fill="#555"/></svg>
<svg style="position:absolute;left:1083.9px;top:105.3px" width="15.5" height="15.5" viewBox="0 0 15 15"><path d="M2 10 L9 2 L14 7 L8 14 L4 14Z" fill="#f5f5f5" stroke="#555" stroke-width="1.3"/><path d="M1 14 L14 14" stroke="#555" stroke-width="1.2"/></svg>
<div style="position:absolute;left:1103.5px;top:105.9px;line-height:14.399999999999999px;font-size:12px;color:#5a5a5a;white-space:nowrap;">Clear</div>
<svg style="position:absolute;left:1132.0px;top:111.2px" width="7" height="4.5" viewBox="0 0 8 5"><path d="M0 0 L8 0 L4 5Z" fill="#555"/></svg>
<svg style="position:absolute;left:1168.5px;top:60.9px" width="32.0" height="29.9" viewBox="0 0 31 29"><text x="1" y="12" font-size="12" font-weight="bold" fill="#2d4f9a" font-family="Liberation Sans">A</text><text x="3" y="27" font-size="12" font-weight="bold" fill="#c0392b" font-family="Liberation Sans">Z</text><path d="M12 4 L30 4 L23 14 L23 25 L19 22 L19 14Z" fill="#c8ccd2" stroke="#8a9098"/></svg>
<div style="position:absolute;left:885.0px;width:600px;text-align:center;top:96.0px;line-height:14.399999999999999px;font-size:12px;color:#262626;white-space:nowrap;">Sort &amp;</div>
<div style="position:absolute;left:881.7px;width:600px;text-align:center;top:108.8px;line-height:14.399999999999999px;font-size:12px;color:#262626;white-space:nowrap;">Filter</div>
<svg style="position:absolute;left:1197.6px;top:114.2px" width="7" height="4.5" viewBox="0 0 8 5"><path d="M0 0 L8 0 L4 5Z" fill="#555"/></svg>
<svg style="position:absolute;left:1211.9px;top:63.0px" width="27.9" height="26.8" viewBox="0 0 27 26"><rect x="2" y="8" width="10" height="17" rx="3" fill="#4a78c0" stroke="#2a4a8a"/><rect x="15" y="8" width="10" height="17" rx="3" fill="#4a78c0" stroke="#2a4a8a"/><rect x="4" y="1" width="6" height="9" fill="#6a90d0" stroke="#2a4a8a"/><rect x="17" y="1" width="6" height="9" fill="#6a90d0" stroke="#2a4a8a"/><rect x="10" y="10" width="7" height="6" fill="#3a5a98"/></svg>
<div style="position:absolute;left:926.7px;width:600px;text-align:center;top:96.0px;line-height:14.399999999999999px;font-size:12px;color:#262626;white-space:nowrap;">Find &amp;</div>
<div style="position:absolute;left:923.8px;width:600px;text-align:center;top:108.8px;line-height:14.399999999999999px;font-size:12px;color:#262626;white-space:nowrap;">Select</div>
<svg style="position:absolute;left:1243.1px;top:114.2px" width="7" height="4.5" viewBox="0 0 8 5"><path d="M0 0 L8 0 L4 5Z" fill="#555"/></svg>
<div style="position:absolute;left:865.2px;width:600px;text-align:center;top:125.8px;line-height:14.399999999999999px;font-size:12px;color:#7b7f86;white-space:nowrap;">Editing</div>
<div style="position:absolute;left:1251.7px;top:58.8px;width:1.3px;height:79.5px;background:linear-gradient(rgba(200,205,212,0.2),#d3d7dd 30%,#c9ced5);"></div>
<div style="position:absolute;left:3.1px;top:143.5px;width:1273.8px;height:27.0px;background:#dde1e6;"></div>
<div style="position:absolute;left:5.4px;top:144.9px;width:156.9px;height:21.1px;background:#fff;border:1px solid #c9ced4;"></div>
<div style="position:absolute;left:-225.7px;width:600px;text-align:center;top:148.2px;line-height:15.0px;font-size:12.5px;color:#333;white-space:nowrap;">G3</div>
<svg style="position:absolute;left:150.4px;top:153.7px" width="8" height="5" viewBox="0 0 8 5"><path d="M0 0 L8 0 L4 5Z" fill="#333"/></svg>
<div style="position:absolute;left:164.5px;top:145.3px;width:84.5px;height:21.9px;background:linear-gradient(#eceef0,#e0e3e6);border:1.5px solid #b9bec5;border-radius:12px 0 0 12px;border-right:none;"></div>
<div style="position:absolute;left:173.4px;top:146.9px;line-height:9.6px;font-size:8px;color:#b9bcc0;white-space:nowrap;">&#8226;</div>
<div style="position:absolute;left:229.8px;top:147.2px;line-height:18.599999999999998px;font-size:15.5px;color:#1a1a1a;white-space:nowrap;font-family:Liberation Serif;font-weight:bold;-webkit-text-stroke:0.3px #1a1a1a"><i>f</i><span style="font-size:10px;font-style:italic">x</span></div>
<div style="position:absolute;left:249.4px;top:144.9px;width:1009.1px;height:21.1px;background:#fff;border:1px solid #c9ced4;"></div>
<div style="position:absolute;left:256.0px;top:148.8px;line-height:15.48px;font-size:12.9px;color:#222;white-space:nowrap;">=(F3-$E$3)/F3</div>
<div style="position:absolute;left:1258.5px;top:144.9px;width:17.8px;height:21.1px;background:linear-gradient(#f6f7f9,#dfe3e8);border:1px solid #bcc2c9;"></div>
<svg style="position:absolute;left:1262.6px;top:151.5px" width="10" height="8" viewBox="0 0 10 8"><path d="M1 2 L5 6 L9 2" stroke="#444" stroke-width="1.6" fill="none"/></svg>
<div style="position:absolute;left:6px;top:170.3px;width:1254px;height:713.3px;background:#fff"></div>
<svg style="position:absolute;left:0;top:0" width="1280" height="960" viewBox="0 0 1280 960"><rect x="30" y="210.9" width="1230" height="1" fill="#d8dbde"/><rect x="30" y="230.8" width="1230" height="1" fill="#d8dbde"/><rect x="30" y="250.8" width="1230" height="1" fill="#d8dbde"/><rect x="30" y="270.7" width="1230" height="1" fill="#d8dbde"/><rect x="30" y="290.7" width="1230" height="1" fill="#d8dbde"/><rect x="30" y="310.7" width="1230" height="1" fill="#d8dbde"/><rect x="30" y="330.6" width="1230" height="1" fill="#d8dbde"/><rect x="30" y="350.6" width="1230" height="1" fill="#d8dbde"/><rect x="30" y="370.5" width="1230" height="1" fill="#d8dbde"/><rect x="30" y="390.5" width="1230" height="1" fill="#d8dbde"/><rect x="30" y="410.5" width="1230" height="1" fill="#d8dbde"/><rect x="30" y="430.4" width="1230" height="1" fill="#d8dbde"/><rect x="30" y="450.4" width="1230" height="1" fill="#d8dbde"/><rect x="30" y="470.3" width="1230" height="1" fill="#d8dbde"/><rect x="30" y="490.3" width="1230" height="1" fill="#d8dbde"/><rect x="30" y="510.3" width="1230" height="1" fill="#d8dbde"/><rect x="30" y="530.2" width="1230" height="1" fill="#d8dbde"/><rect x="30" y="550.2" width="1230" height="1" fill="#d8dbde"/><rect x="30" y="570.1" width="1230" height="1" fill="#d8dbde"/><rect x="30" y="590.1" width="1230" height="1" fill="#d8dbde"/><rect x="30" y="610.1" width="1230" height="1" fill="#d8dbde"/><rect x="30" y="630.0" width="1230" height="1" fill="#d8dbde"/><rect x="30" y="650.0" width="1230" height="1" fill="#d8dbde"/><rect x="30" y="669.9" width="1230" height="1" fill="#d8dbde"/><rect x="30" y="689.9" width="1230" height="1" fill="#d8dbde"/><rect x="30" y="709.9" width="1230" height="1" fill="#d8dbde"/><rect x="30" y="729.8" width="1230" height="1" fill="#d8dbde"/><rect x="30" y="749.8" width="1230" height="1" fill="#d8dbde"/><rect x="30" y="769.7" width="1230" height="1" fill="#d8dbde"/><rect x="30" y="789.7" width="1230" height="1" fill="#d8dbde"/><rect x="30" y="809.7" width="1230" height="1" fill="#d8dbde"/><rect x="30" y="829.6" width="1230" height="1" fill="#d8dbde"/><rect x="30" y="849.6" width="1230" height="1" fill="#d8dbde"/><rect x="30" y="869.5" width="1230" height="1" fill="#d8dbde"/><rect x="93.46000000000001" y="191.4" width="1" height="692.2" fill="#d8dbde"/><rect x="157.42000000000002" y="191.4" width="1" height="692.2" fill="#d8dbde"/><rect x="221.38" y="191.4" width="1" height="692.2" fill="#d8dbde"/><rect x="285.34000000000003" y="191.4" width="1" height="692.2" fill="#d8dbde"/><rect x="349.3" y="191.4" width="1" height="692.2" fill="#d8dbde"/><rect x="413.26" y="191.4" width="1" height="692.2" fill="#d8dbde"/><rect x="477.22" y="191.4" width="1" height="692.2" fill="#d8dbde"/><rect x="541.1800000000001" y="191.4" width="1" height="692.2" fill="#d8dbde"/><rect x="605.14" y="191.4" width="1" height="692.2" fill="#d8dbde"/><rect x="669.1" y="191.4" width="1" height="692.2" fill="#d8dbde"/><rect x="733.0600000000001" y="191.4" width="1" height="692.2" fill="#d8dbde"/><rect x="797.02" y="191.4" width="1" height="692.2" fill="#d8dbde"/><rect x="860.98" y="191.4" width="1" height="692.2" fill="#d8dbde"/><rect x="924.94" y="191.4" width="1" height="692.2" fill="#d8dbde"/><rect x="988.9" y="191.4" width="1" height="692.2" fill="#d8dbde"/><rect x="1052.8600000000001" y="191.4" width="1" height="692.2" fill="#d8dbde"/><rect x="1116.82" y="191.4" width="1" height="692.2" fill="#d8dbde"/><rect x="1180.78" y="191.4" width="1" height="692.2" fill="#d8dbde"/><rect x="1244.74" y="191.4" width="1" height="692.2" fill="#d8dbde"/></svg>
<div style="position:absolute;left:6px;top:170.3px;width:1254px;height:21.099999999999994px;background:linear-gradient(#f5f6f8,#e6e9ec);border-bottom:1px solid #b8bec6"></div>
<div style="position:absolute;left:6px;top:170.3px;width:24px;height:21.099999999999994px;background:linear-gradient(#f1f2f4,#e3e6e9);border-right:1px solid #b8bec6;border-bottom:1px solid #b8bec6"></div>
<svg style="position:absolute;left:14px;top:176.3px" width="12" height="12" viewBox="0 0 12 12"><path d="M11 1 L11 11 L1 11Z" fill="#c4c9cf"/></svg>
<div style="position:absolute;left:29.5px;top:172.3px;width:1px;height:19.099999999999994px;background:#c5cad1"></div>
<div style="position:absolute;left:30.0px;top:170.3px;width:63.96px;height:21.099999999999994px;line-height:21.099999999999994px;text-align:center;font-size:13px;color:#4a5560;-webkit-text-stroke:0">A</div>
<div style="position:absolute;left:93.46000000000001px;top:172.3px;width:1px;height:19.099999999999994px;background:#c5cad1"></div>
<div style="position:absolute;left:93.96000000000001px;top:170.3px;width:63.96px;height:21.099999999999994px;line-height:21.099999999999994px;text-align:center;font-size:13px;color:#4a5560;-webkit-text-stroke:0">B</div>
<div style="position:absolute;left:157.42000000000002px;top:172.3px;width:1px;height:19.099999999999994px;background:#c5cad1"></div>
<div style="position:absolute;left:157.92000000000002px;top:170.3px;width:63.96px;height:21.099999999999994px;line-height:21.099999999999994px;text-align:center;font-size:13px;color:#4a5560;-webkit-text-stroke:0">C</div>
<div style="position:absolute;left:221.38px;top:172.3px;width:1px;height:19.099999999999994px;background:#c5cad1"></div>
<div style="position:absolute;left:221.88px;top:170.3px;width:63.96px;height:21.099999999999994px;line-height:21.099999999999994px;text-align:center;font-size:13px;color:#4a5560;-webkit-text-stroke:0">D</div>
<div style="position:absolute;left:285.34000000000003px;top:172.3px;width:1px;height:19.099999999999994px;background:#c5cad1"></div>
<div style="position:absolute;left:285.84000000000003px;top:170.3px;width:63.96px;height:21.099999999999994px;line-height:21.099999999999994px;text-align:center;font-size:13px;color:#4a5560;-webkit-text-stroke:0">E</div>
<div style="position:absolute;left:349.3px;top:172.3px;width:1px;height:19.099999999999994px;background:#c5cad1"></div>
<div style="position:absolute;left:349.8px;top:170.3px;width:63.96px;height:21.099999999999994px;line-height:21.099999999999994px;text-align:center;font-size:13px;color:#4a5560;-webkit-text-stroke:0">F</div>
<div style="position:absolute;left:413.76px;top:170.3px;width:63.96px;height:21.099999999999994px;background:linear-gradient(#f9d877,#f3c553);border-bottom:1px solid #d8a23a"></div>
<div style="position:absolute;left:413.26px;top:172.3px;width:1px;height:19.099999999999994px;background:#c5cad1"></div>
<div style="position:absolute;left:413.76px;top:170.3px;width:63.96px;height:21.099999999999994px;line-height:21.099999999999994px;text-align:center;font-size:13px;color:#5a3a0a;-webkit-text-stroke:0">G</div>
<div style="position:absolute;left:477.22px;top:172.3px;width:1px;height:19.099999999999994px;background:#c5cad1"></div>
<div style="position:absolute;left:477.72px;top:170.3px;width:63.96px;height:21.099999999999994px;line-height:21.099999999999994px;text-align:center;font-size:13px;color:#4a5560;-webkit-text-stroke:0">H</div>
<div style="position:absolute;left:541.1800000000001px;top:172.3px;width:1px;height:19.099999999999994px;background:#c5cad1"></div>
<div style="position:absolute;left:541.6800000000001px;top:170.3px;width:63.96px;height:21.099999999999994px;line-height:21.099999999999994px;text-align:center;font-size:13px;color:#4a5560;-webkit-text-stroke:0">I</div>
<div style="position:absolute;left:605.14px;top:172.3px;width:1px;height:19.099999999999994px;background:#c5cad1"></div>
<div style="position:absolute;left:605.64px;top:170.3px;width:63.96px;height:21.099999999999994px;line-height:21.099999999999994px;text-align:center;font-size:13px;color:#4a5560;-webkit-text-stroke:0">J</div>
<div style="position:absolute;left:669.1px;top:172.3px;width:1px;height:19.099999999999994px;background:#c5cad1"></div>
<div style="position:absolute;left:669.6px;top:170.3px;width:63.96px;height:21.099999999999994px;line-height:21.099999999999994px;text-align:center;font-size:13px;color:#4a5560;-webkit-text-stroke:0">K</div>
<div style="position:absolute;left:733.0600000000001px;top:172.3px;width:1px;height:19.099999999999994px;background:#c5cad1"></div>
<div style="position:absolute;left:733.5600000000001px;top:170.3px;width:63.96px;height:21.099999999999994px;line-height:21.099999999999994px;text-align:center;font-size:13px;color:#4a5560;-webkit-text-stroke:0">L</div>
<div style="position:absolute;left:797.02px;top:172.3px;width:1px;height:19.099999999999994px;background:#c5cad1"></div>
<div style="position:absolute;left:797.52px;top:170.3px;width:63.96px;height:21.099999999999994px;line-height:21.099999999999994px;text-align:center;font-size:13px;color:#4a5560;-webkit-text-stroke:0">M</div>
<div style="position:absolute;left:860.98px;top:172.3px;width:1px;height:19.099999999999994px;background:#c5cad1"></div>
<div style="position:absolute;left:861.48px;top:170.3px;width:63.96px;height:21.099999999999994px;line-height:21.099999999999994px;text-align:center;font-size:13px;color:#4a5560;-webkit-text-stroke:0">N</div>
<div style="position:absolute;left:924.94px;top:172.3px;width:1px;height:19.099999999999994px;background:#c5cad1"></div>
<div style="position:absolute;left:925.44px;top:170.3px;width:63.96px;height:21.099999999999994px;line-height:21.099999999999994px;text-align:center;font-size:13px;color:#4a5560;-webkit-text-stroke:0">O</div>
<div style="position:absolute;left:988.9px;top:172.3px;width:1px;height:19.099999999999994px;background:#c5cad1"></div>
<div style="position:absolute;left:989.4px;top:170.3px;width:63.96px;height:21.099999999999994px;line-height:21.099999999999994px;text-align:center;font-size:13px;color:#4a5560;-webkit-text-stroke:0">P</div>
<div style="position:absolute;left:1052.8600000000001px;top:172.3px;width:1px;height:19.099999999999994px;background:#c5cad1"></div>
<div style="position:absolute;left:1053.3600000000001px;top:170.3px;width:63.96px;height:21.099999999999994px;line-height:21.099999999999994px;text-align:center;font-size:13px;color:#4a5560;-webkit-text-stroke:0">Q</div>
<div style="position:absolute;left:1116.82px;top:172.3px;width:1px;height:19.099999999999994px;background:#c5cad1"></div>
<div style="position:absolute;left:1117.32px;top:170.3px;width:63.96px;height:21.099999999999994px;line-height:21.099999999999994px;text-align:center;font-size:13px;color:#4a5560;-webkit-text-stroke:0">R</div>
<div style="position:absolute;left:1180.78px;top:172.3px;width:1px;height:19.099999999999994px;background:#c5cad1"></div>
<div style="position:absolute;left:1181.28px;top:170.3px;width:63.96px;height:21.099999999999994px;line-height:21.099999999999994px;text-align:center;font-size:13px;color:#4a5560;-webkit-text-stroke:0">S</div>
<div style="position:absolute;left:1244.74px;top:172.3px;width:1px;height:19.099999999999994px;background:#c5cad1"></div>
<div style="position:absolute;left:1245.24px;top:170.3px;width:63.96px;height:21.099999999999994px;line-height:21.099999999999994px;text-align:center;font-size:13px;color:#4a5560;-webkit-text-stroke:0">T</div>
<div style="position:absolute;left:6px;top:191.4px;width:24px;height:692.2px;background:linear-gradient(90deg,#eceef1,#e2e5e9);border-right:1px solid #b8bec6"></div>
<div style="position:absolute;left:6px;top:190.9px;width:24px;height:1px;background:#c5cad1"></div>
<div style="position:absolute;left:5.5px;top:191.4px;width:23px;height:19.96px;-webkit-text-stroke:0.2px #3a4048;line-height:22.46px;text-align:center;font-size:13px;color:#3a4048;overflow:hidden;clip-path:inset(0 0 0.0px 0)">1</div>
<div style="position:absolute;left:6px;top:210.9px;width:24px;height:1px;background:#c5cad1"></div>
<div style="position:absolute;left:5.5px;top:211.4px;width:23px;height:19.96px;-webkit-text-stroke:0.2px #3a4048;line-height:22.46px;text-align:center;font-size:13px;color:#3a4048;overflow:hidden;clip-path:inset(0 0 0.0px 0)">2</div>
<div style="position:absolute;left:6px;top:230.8px;width:24px;height:1px;background:#c5cad1"></div>
<div style="position:absolute;left:6px;top:231.3px;width:24px;height:19.96px;background:linear-gradient(#f9d877,#f3c553);border-right:1px solid #d8a23a"></div>
<div style="position:absolute;left:5.5px;top:231.3px;width:23px;height:19.96px;-webkit-text-stroke:0.2px #5a3a0a;line-height:22.46px;text-align:center;font-size:13px;color:#5a3a0a;overflow:hidden;clip-path:inset(0 0 0.0px 0)">3</div>
<div style="position:absolute;left:6px;top:250.8px;width:24px;height:1px;background:#c5cad1"></div>
<div style="position:absolute;left:5.5px;top:251.3px;width:23px;height:19.96px;-webkit-text-stroke:0.2px #3a4048;line-height:22.46px;text-align:center;font-size:13px;color:#3a4048;overflow:hidden;clip-path:inset(0 0 0.0px 0)">4</div>
<div style="position:absolute;left:6px;top:270.7px;width:24px;height:1px;background:#c5cad1"></div>
<div style="position:absolute;left:5.5px;top:271.2px;width:23px;height:19.96px;-webkit-text-stroke:0.2px #3a4048;line-height:22.46px;text-align:center;font-size:13px;color:#3a4048;overflow:hidden;clip-path:inset(0 0 0.0px 0)">5</div>
<div style="position:absolute;left:6px;top:290.7px;width:24px;height:1px;background:#c5cad1"></div>
<div style="position:absolute;left:5.5px;top:291.2px;width:23px;height:19.96px;-webkit-text-stroke:0.2px #3a4048;line-height:22.46px;text-align:center;font-size:13px;color:#3a4048;overflow:hidden;clip-path:inset(0 0 0.0px 0)">6</div>
<div style="position:absolute;left:6px;top:310.7px;width:24px;height:1px;background:#c5cad1"></div>
<div style="position:absolute;left:5.5px;top:311.2px;width:23px;height:19.96px;-webkit-text-stroke:0.2px #3a4048;line-height:22.46px;text-align:center;font-size:13px;color:#3a4048;overflow:hidden;clip-path:inset(0 0 0.0px 0)">7</div>
<div style="position:absolute;left:6px;top:330.6px;width:24px;height:1px;background:#c5cad1"></div>
<div style="position:absolute;left:5.5px;top:331.1px;width:23px;height:19.96px;-webkit-text-stroke:0.2px #3a4048;line-height:22.46px;text-align:center;font-size:13px;color:#3a4048;overflow:hidden;clip-path:inset(0 0 0.0px 0)">8</div>
<div style="position:absolute;left:6px;top:350.6px;width:24px;height:1px;background:#c5cad1"></div>
<div style="position:absolute;left:5.5px;top:351.1px;width:23px;height:19.96px;-webkit-text-stroke:0.2px #3a4048;line-height:22.46px;text-align:center;font-size:13px;color:#3a4048;overflow:hidden;clip-path:inset(0 0 0.0px 0)">9</div>
<div style="position:absolute;left:6px;top:370.5px;width:24px;height:1px;background:#c5cad1"></div>
<div style="position:absolute;left:5.5px;top:371.0px;width:23px;height:19.96px;-webkit-text-stroke:0.2px #3a4048;line-height:22.46px;text-align:center;font-size:13px;color:#3a4048;overflow:hidden;clip-path:inset(0 0 0.0px 0)">10</div>
<div style="position:absolute;left:6px;top:390.5px;width:24px;height:1px;background:#c5cad1"></div>
<div style="position:absolute;left:5.5px;top:391.0px;width:23px;height:19.96px;-webkit-text-stroke:0.2px #3a4048;line-height:22.46px;text-align:center;font-size:13px;color:#3a4048;overflow:hidden;clip-path:inset(0 0 0.0px 0)">11</div>
<div style="position:absolute;left:6px;top:410.5px;width:24px;height:1px;background:#c5cad1"></div>
<div style="position:absolute;left:5.5px;top:411.0px;width:23px;height:19.96px;-webkit-text-stroke:0.2px #3a4048;line-height:22.46px;text-align:center;font-size:13px;color:#3a4048;overflow:hidden;clip-path:inset(0 0 0.0px 0)">12</div>
<div style="position:absolute;left:6px;top:430.4px;width:24px;height:1px;background:#c5cad1"></div>
<div style="position:absolute;left:5.5px;top:430.9px;width:23px;height:19.96px;-webkit-text-stroke:0.2px #3a4048;line-height:22.46px;text-align:center;font-size:13px;color:#3a4048;overflow:hidden;clip-path:inset(0 0 0.0px 0)">13</div>
<div style="position:absolute;left:6px;top:450.4px;width:24px;height:1px;background:#c5cad1"></div>
<div style="position:absolute;left:5.5px;top:450.9px;width:23px;height:19.96px;-webkit-text-stroke:0.2px #3a4048;line-height:22.46px;text-align:center;font-size:13px;color:#3a4048;overflow:hidden;clip-path:inset(0 0 0.0px 0)">14</div>
<div style="position:absolute;left:6px;top:470.3px;width:24px;height:1px;background:#c5cad1"></div>
<div style="position:absolute;left:5.5px;top:470.8px;width:23px;height:19.96px;-webkit-text-stroke:0.2px #3a4048;line-height:22.46px;text-align:center;font-size:13px;color:#3a4048;overflow:hidden;clip-path:inset(0 0 0.0px 0)">15</div>
<div style="position:absolute;left:6px;top:490.3px;width:24px;height:1px;background:#c5cad1"></div>
<div style="position:absolute;left:5.5px;top:490.8px;width:23px;height:19.96px;-webkit-text-stroke:0.2px #3a4048;line-height:22.46px;text-align:center;font-size:13px;color:#3a4048;overflow:hidden;clip-path:inset(0 0 0.0px 0)">16</div>
<div style="position:absolute;left:6px;top:510.3px;width:24px;height:1px;background:#c5cad1"></div>
<div style="position:absolute;left:5.5px;top:510.8px;width:23px;height:19.96px;-webkit-text-stroke:0.2px #3a4048;line-height:22.46px;text-align:center;font-size:13px;color:#3a4048;overflow:hidden;clip-path:inset(0 0 0.0px 0)">17</div>
<div style="position:absolute;left:6px;top:530.2px;width:24px;height:1px;background:#c5cad1"></div>
<div style="position:absolute;left:5.5px;top:530.7px;width:23px;height:19.96px;-webkit-text-stroke:0.2px #3a4048;line-height:22.46px;text-align:center;font-size:13px;color:#3a4048;overflow:hidden;clip-path:inset(0 0 0.0px 0)">18</div>
<div style="position:absolute;left:6px;top:550.2px;width:24px;height:1px;background:#c5cad1"></div>
<div style="position:absolute;left:5.5px;top:550.7px;width:23px;height:19.96px;-webkit-text-stroke:0.2px #3a4048;line-height:22.46px;text-align:center;font-size:13px;color:#3a4048;overflow:hidden;clip-path:inset(0 0 0.0px 0)">19</div>
<div style="position:absolute;left:6px;top:570.1px;width:24px;height:1px;background:#c5cad1"></div>
<div style="position:absolute;left:5.5px;top:570.6px;width:23px;height:19.96px;-webkit-text-stroke:0.2px #3a4048;line-height:22.46px;text-align:center;font-size:13px;color:#3a4048;overflow:hidden;clip-path:inset(0 0 0.0px 0)">20</div>
<div style="position:absolute;left:6px;top:590.1px;width:24px;height:1px;background:#c5cad1"></div>
<div style="position:absolute;left:5.5px;top:590.6px;width:23px;height:19.96px;-webkit-text-stroke:0.2px #3a4048;line-height:22.46px;text-align:center;font-size:13px;color:#3a4048;overflow:hidden;clip-path:inset(0 0 0.0px 0)">21</div>
<div style="position:absolute;left:6px;top:610.1px;width:24px;height:1px;background:#c5cad1"></div>
<div style="position:absolute;left:5.5px;top:610.6px;width:23px;height:19.96px;-webkit-text-stroke:0.2px #3a4048;line-height:22.46px;text-align:center;font-size:13px;color:#3a4048;overflow:hidden;clip-path:inset(0 0 0.0px 0)">22</div>
<div style="position:absolute;left:6px;top:630.0px;width:24px;height:1px;background:#c5cad1"></div>
<div style="position:absolute;left:5.5px;top:630.5px;width:23px;height:19.96px;-webkit-text-stroke:0.2px #3a4048;line-height:22.46px;text-align:center;font-size:13px;color:#3a4048;overflow:hidden;clip-path:inset(0 0 0.0px 0)">23</div>
<div style="position:absolute;left:6px;top:650.0px;width:24px;height:1px;background:#c5cad1"></div>
<div style="position:absolute;left:5.5px;top:650.5px;width:23px;height:19.96px;-webkit-text-stroke:0.2px #3a4048;line-height:22.46px;text-align:center;font-size:13px;color:#3a4048;overflow:hidden;clip-path:inset(0 0 0.0px 0)">24</div>
<div style="position:absolute;left:6px;top:669.9px;width:24px;height:1px;background:#c5cad1"></div>
<div style="position:absolute;left:5.5px;top:670.4px;width:23px;height:19.96px;-webkit-text-stroke:0.2px #3a4048;line-height:22.46px;text-align:center;font-size:13px;color:#3a4048;overflow:hidden;clip-path:inset(0 0 0.0px 0)">25</div>
<div style="position:absolute;left:6px;top:689.9px;width:24px;height:1px;background:#c5cad1"></div>
<div style="position:absolute;left:5.5px;top:690.4px;width:23px;height:19.96px;-webkit-text-stroke:0.2px #3a4048;line-height:22.46px;text-align:center;font-size:13px;color:#3a4048;overflow:hidden;clip-path:inset(0 0 0.0px 0)">26</div>
<div style="position:absolute;left:6px;top:709.9px;width:24px;height:1px;background:#c5cad1"></div>
<div style="position:absolute;left:5.5px;top:710.4px;width:23px;height:19.96px;-webkit-text-stroke:0.2px #3a4048;line-height:22.46px;text-align:center;font-size:13px;color:#3a4048;overflow:hidden;clip-path:inset(0 0 0.0px 0)">27</div>
<div style="position:absolute;left:6px;top:729.8px;width:24px;height:1px;background:#c5cad1"></div>
<div style="position:absolute;left:5.5px;top:730.3px;width:23px;height:19.96px;-webkit-text-stroke:0.2px #3a4048;line-height:22.46px;text-align:center;font-size:13px;color:#3a4048;overflow:hidden;clip-path:inset(0 0 0.0px 0)">28</div>
<div style="position:absolute;left:6px;top:749.8px;width:24px;height:1px;background:#c5cad1"></div>
<div style="position:absolute;left:5.5px;top:750.3px;width:23px;height:19.96px;-webkit-text-stroke:0.2px #3a4048;line-height:22.46px;text-align:center;font-size:13px;color:#3a4048;overflow:hidden;clip-path:inset(0 0 0.0px 0)">29</div>
<div style="position:absolute;left:6px;top:769.7px;width:24px;height:1px;background:#c5cad1"></div>
<div style="position:absolute;left:5.5px;top:770.2px;width:23px;height:19.96px;-webkit-text-stroke:0.2px #3a4048;line-height:22.46px;text-align:center;font-size:13px;color:#3a4048;overflow:hidden;clip-path:inset(0 0 0.0px 0)">30</div>
<div style="position:absolute;left:6px;top:789.7px;width:24px;height:1px;background:#c5cad1"></div>
<div style="position:absolute;left:5.5px;top:790.2px;width:23px;height:19.96px;-webkit-text-stroke:0.2px #3a4048;line-height:22.46px;text-align:center;font-size:13px;color:#3a4048;overflow:hidden;clip-path:inset(0 0 0.0px 0)">31</div>
<div style="position:absolute;left:6px;top:809.7px;width:24px;height:1px;background:#c5cad1"></div>
<div style="position:absolute;left:5.5px;top:810.2px;width:23px;height:19.96px;-webkit-text-stroke:0.2px #3a4048;line-height:22.46px;text-align:center;font-size:13px;color:#3a4048;overflow:hidden;clip-path:inset(0 0 0.0px 0)">32</div>
<div style="position:absolute;left:6px;top:829.6px;width:24px;height:1px;background:#c5cad1"></div>
<div style="position:absolute;left:5.5px;top:830.1px;width:23px;height:19.96px;-webkit-text-stroke:0.2px #3a4048;line-height:22.46px;text-align:center;font-size:13px;color:#3a4048;overflow:hidden;clip-path:inset(0 0 0.0px 0)">33</div>
<div style="position:absolute;left:6px;top:849.6px;width:24px;height:1px;background:#c5cad1"></div>
<div style="position:absolute;left:5.5px;top:850.1px;width:23px;height:19.96px;-webkit-text-stroke:0.2px #3a4048;line-height:22.46px;text-align:center;font-size:13px;color:#3a4048;overflow:hidden;clip-path:inset(0 0 0.0px 0)">34</div>
<div style="position:absolute;left:6px;top:869.5px;width:24px;height:1px;background:#c5cad1"></div>
<div style="position:absolute;left:5.5px;top:870.0px;width:23px;height:19.96px;-webkit-text-stroke:0.2px #3a4048;line-height:22.46px;text-align:center;font-size:13px;color:#3a4048;overflow:hidden;clip-path:inset(0 0 6.4px 0)">35</div>
<div style="position:absolute;left:285.84000000000003px;top:232.5px;width:60.36px;height:19.96px;line-height:21.96px;text-align:right;font-size:14.2px;color:#1a1a1a;-webkit-text-stroke:0.05px #111"><span style="display:inline-block;transform:scaleX(0.8);transform-origin:100% 50%;letter-spacing:0.7px;margin-right:-0.7px">200</span></div>
<div style="position:absolute;left:349.8px;top:232.5px;width:60.36px;height:19.96px;line-height:21.96px;text-align:right;font-size:14.2px;color:#1a1a1a;-webkit-text-stroke:0.05px #111"><span style="display:inline-block;transform:scaleX(0.8);transform-origin:100% 50%;letter-spacing:0.7px;margin-right:-0.7px">321</span></div>
<div style="position:absolute;left:413.76px;top:232.5px;width:60.36px;height:19.96px;line-height:21.96px;text-align:right;font-size:14.2px;color:#1a1a1a;-webkit-text-stroke:0.05px #111"><span style="display:inline-block;transform:scaleX(0.8);transform-origin:100% 50%;letter-spacing:0.7px;margin-right:-0.7px">38%</span></div>
<div style="position:absolute;left:349.8px;top:252.5px;width:60.36px;height:19.96px;line-height:21.96px;text-align:right;font-size:14.2px;color:#1a1a1a;-webkit-text-stroke:0.05px #111"><span style="display:inline-block;transform:scaleX(0.8);transform-origin:100% 50%;letter-spacing:0.7px;margin-right:-0.7px">337</span></div>
<div style="position:absolute;left:413.76px;top:252.5px;width:60.36px;height:19.96px;line-height:21.96px;text-align:right;font-size:14.2px;color:#1a1a1a;-webkit-text-stroke:0.05px #111"><span style="display:inline-block;transform:scaleX(0.8);transform-origin:100% 50%;letter-spacing:0.7px;margin-right:-0.7px">41%</span></div>
<div style="position:absolute;left:349.8px;top:272.4px;width:60.36px;height:19.96px;line-height:21.96px;text-align:right;font-size:14.2px;color:#1a1a1a;-webkit-text-stroke:0.05px #111"><span style="display:inline-block;transform:scaleX(0.8);transform-origin:100% 50%;letter-spacing:0.7px;margin-right:-0.7px">206</span></div>
<div style="position:absolute;left:413.76px;top:272.4px;width:60.36px;height:19.96px;line-height:21.96px;text-align:right;font-size:14.2px;color:#1a1a1a;-webkit-text-stroke:0.05px #111"><span style="display:inline-block;transform:scaleX(0.8);transform-origin:100% 50%;letter-spacing:0.7px;margin-right:-0.7px">3%</span></div>
<div style="position:absolute;left:349.8px;top:292.4px;width:60.36px;height:19.96px;line-height:21.96px;text-align:right;font-size:14.2px;color:#1a1a1a;-webkit-text-stroke:0.05px #111"><span style="display:inline-block;transform:scaleX(0.8);transform-origin:100% 50%;letter-spacing:0.7px;margin-right:-0.7px">316</span></div>
<div style="position:absolute;left:413.76px;top:292.4px;width:60.36px;height:19.96px;line-height:21.96px;text-align:right;font-size:14.2px;color:#1a1a1a;-webkit-text-stroke:0.05px #111"><span style="display:inline-block;transform:scaleX(0.8);transform-origin:100% 50%;letter-spacing:0.7px;margin-right:-0.7px">37%</span></div>
<div style="position:absolute;left:349.8px;top:312.4px;width:60.36px;height:19.96px;line-height:21.96px;text-align:right;font-size:14.2px;color:#1a1a1a;-webkit-text-stroke:0.05px #111"><span style="display:inline-block;transform:scaleX(0.8);transform-origin:100% 50%;letter-spacing:0.7px;margin-right:-0.7px">356</span></div>
<div style="position:absolute;left:413.76px;top:312.4px;width:60.36px;height:19.96px;line-height:21.96px;text-align:right;font-size:14.2px;color:#1a1a1a;-webkit-text-stroke:0.05px #111"><span style="display:inline-block;transform:scaleX(0.8);transform-origin:100% 50%;letter-spacing:0.7px;margin-right:-0.7px">44%</span></div>
<div style="position:absolute;left:349.8px;top:332.3px;width:60.36px;height:19.96px;line-height:21.96px;text-align:right;font-size:14.2px;color:#1a1a1a;-webkit-text-stroke:0.05px #111"><span style="display:inline-block;transform:scaleX(0.8);transform-origin:100% 50%;letter-spacing:0.7px;margin-right:-0.7px">337</span></div>
<div style="position:absolute;left:413.76px;top:332.3px;width:60.36px;height:19.96px;line-height:21.96px;text-align:right;font-size:14.2px;color:#1a1a1a;-webkit-text-stroke:0.05px #111"><span style="display:inline-block;transform:scaleX(0.8);transform-origin:100% 50%;letter-spacing:0.7px;margin-right:-0.7px">41%</span></div>
<div style="position:absolute;left:349.8px;top:352.3px;width:60.36px;height:19.96px;line-height:21.96px;text-align:right;font-size:14.2px;color:#1a1a1a;-webkit-text-stroke:0.05px #111"><span style="display:inline-block;transform:scaleX(0.8);transform-origin:100% 50%;letter-spacing:0.7px;margin-right:-0.7px">285</span></div>
<div style="position:absolute;left:413.76px;top:352.3px;width:60.36px;height:19.96px;line-height:21.96px;text-align:right;font-size:14.2px;color:#1a1a1a;-webkit-text-stroke:0.05px #111"><span style="display:inline-block;transform:scaleX(0.8);transform-origin:100% 50%;letter-spacing:0.7px;margin-right:-0.7px">30%</span></div>
<div style="position:absolute;left:349.8px;top:372.2px;width:60.36px;height:19.96px;line-height:21.96px;text-align:right;font-size:14.2px;color:#1a1a1a;-webkit-text-stroke:0.05px #111"><span style="display:inline-block;transform:scaleX(0.8);transform-origin:100% 50%;letter-spacing:0.7px;margin-right:-0.7px">365</span></div>
<div style="position:absolute;left:413.76px;top:372.2px;width:60.36px;height:19.96px;line-height:21.96px;text-align:right;font-size:14.2px;color:#1a1a1a;-webkit-text-stroke:0.05px #111"><span style="display:inline-block;transform:scaleX(0.8);transform-origin:100% 50%;letter-spacing:0.7px;margin-right:-0.7px">45%</span></div>
<div style="position:absolute;left:349.8px;top:392.2px;width:60.36px;height:19.96px;line-height:21.96px;text-align:right;font-size:14.2px;color:#1a1a1a;-webkit-text-stroke:0.05px #111"><span style="display:inline-block;transform:scaleX(0.8);transform-origin:100% 50%;letter-spacing:0.7px;margin-right:-0.7px">324</span></div>
<div style="position:absolute;left:413.76px;top:392.2px;width:60.36px;height:19.96px;line-height:21.96px;text-align:right;font-size:14.2px;color:#1a1a1a;-webkit-text-stroke:0.05px #111"><span style="display:inline-block;transform:scaleX(0.8);transform-origin:100% 50%;letter-spacing:0.7px;margin-right:-0.7px">38%</span></div>
<div style="position:absolute;left:349.8px;top:412.2px;width:60.36px;height:19.96px;line-height:21.96px;text-align:right;font-size:14.2px;color:#1a1a1a;-webkit-text-stroke:0.05px #111"><span style="display:inline-block;transform:scaleX(0.8);transform-origin:100% 50%;letter-spacing:0.7px;margin-right:-0.7px">372</span></div>
<div style="position:absolute;left:413.76px;top:412.2px;width:60.36px;height:19.96px;line-height:21.96px;text-align:right;font-size:14.2px;color:#1a1a1a;-webkit-text-stroke:0.05px #111"><span style="display:inline-block;transform:scaleX(0.8);transform-origin:100% 50%;letter-spacing:0.7px;margin-right:-0.7px">46%</span></div>
<div style="position:absolute;left:349.8px;top:432.1px;width:60.36px;height:19.96px;line-height:21.96px;text-align:right;font-size:14.2px;color:#1a1a1a;-webkit-text-stroke:0.05px #111"><span style="display:inline-block;transform:scaleX(0.8);transform-origin:100% 50%;letter-spacing:0.7px;margin-right:-0.7px">267</span></div>
<div style="position:absolute;left:413.76px;top:432.1px;width:60.36px;height:19.96px;line-height:21.96px;text-align:right;font-size:14.2px;color:#1a1a1a;-webkit-text-stroke:0.05px #111"><span style="display:inline-block;transform:scaleX(0.8);transform-origin:100% 50%;letter-spacing:0.7px;margin-right:-0.7px">25%</span></div>
<div style="position:absolute;left:349.8px;top:452.1px;width:60.36px;height:19.96px;line-height:21.96px;text-align:right;font-size:14.2px;color:#1a1a1a;-webkit-text-stroke:0.05px #111"><span style="display:inline-block;transform:scaleX(0.8);transform-origin:100% 50%;letter-spacing:0.7px;margin-right:-0.7px">282</span></div>
<div style="position:absolute;left:413.76px;top:452.1px;width:60.36px;height:19.96px;line-height:21.96px;text-align:right;font-size:14.2px;color:#1a1a1a;-webkit-text-stroke:0.05px #111"><span style="display:inline-block;transform:scaleX(0.8);transform-origin:100% 50%;letter-spacing:0.7px;margin-right:-0.7px">29%</span></div>
<div style="position:absolute;left:349.8px;top:472.0px;width:60.36px;height:19.96px;line-height:21.96px;text-align:right;font-size:14.2px;color:#1a1a1a;-webkit-text-stroke:0.05px #111"><span style="display:inline-block;transform:scaleX(0.8);transform-origin:100% 50%;letter-spacing:0.7px;margin-right:-0.7px">281</span></div>
<div style="position:absolute;left:413.76px;top:472.0px;width:60.36px;height:19.96px;line-height:21.96px;text-align:right;font-size:14.2px;color:#1a1a1a;-webkit-text-stroke:0.05px #111"><span style="display:inline-block;transform:scaleX(0.8);transform-origin:100% 50%;letter-spacing:0.7px;margin-right:-0.7px">29%</span></div>
<div style="position:absolute;left:349.8px;top:492.0px;width:60.36px;height:19.96px;line-height:21.96px;text-align:right;font-size:14.2px;color:#1a1a1a;-webkit-text-stroke:0.05px #111"><span style="display:inline-block;transform:scaleX(0.8);transform-origin:100% 50%;letter-spacing:0.7px;margin-right:-0.7px">279</span></div>
<div style="position:absolute;left:413.76px;top:492.0px;width:60.36px;height:19.96px;line-height:21.96px;text-align:right;font-size:14.2px;color:#1a1a1a;-webkit-text-stroke:0.05px #111"><span style="display:inline-block;transform:scaleX(0.8);transform-origin:100% 50%;letter-spacing:0.7px;margin-right:-0.7px">28%</span></div>
<div style="position:absolute;left:349.8px;top:512.0px;width:60.36px;height:19.96px;line-height:21.96px;text-align:right;font-size:14.2px;color:#1a1a1a;-webkit-text-stroke:0.05px #111"><span style="display:inline-block;transform:scaleX(0.8);transform-origin:100% 50%;letter-spacing:0.7px;margin-right:-0.7px">221</span></div>
<div style="position:absolute;left:413.76px;top:512.0px;width:60.36px;height:19.96px;line-height:21.96px;text-align:right;font-size:14.2px;color:#1a1a1a;-webkit-text-stroke:0.05px #111"><span style="display:inline-block;transform:scaleX(0.8);transform-origin:100% 50%;letter-spacing:0.7px;margin-right:-0.7px">10%</span></div>
<div style="position:absolute;left:349.8px;top:531.9px;width:60.36px;height:19.96px;line-height:21.96px;text-align:right;font-size:14.2px;color:#1a1a1a;-webkit-text-stroke:0.05px #111"><span style="display:inline-block;transform:scaleX(0.8);transform-origin:100% 50%;letter-spacing:0.7px;margin-right:-0.7px">333</span></div>
<div style="position:absolute;left:413.76px;top:531.9px;width:60.36px;height:19.96px;line-height:21.96px;text-align:right;font-size:14.2px;color:#1a1a1a;-webkit-text-stroke:0.05px #111"><span style="display:inline-block;transform:scaleX(0.8);transform-origin:100% 50%;letter-spacing:0.7px;margin-right:-0.7px">40%</span></div>
<div style="position:absolute;left:349.8px;top:551.9px;width:60.36px;height:19.96px;line-height:21.96px;text-align:right;font-size:14.2px;color:#1a1a1a;-webkit-text-stroke:0.05px #111"><span style="display:inline-block;transform:scaleX(0.8);transform-origin:100% 50%;letter-spacing:0.7px;margin-right:-0.7px">380</span></div>
<div style="position:absolute;left:413.76px;top:551.9px;width:60.36px;height:19.96px;line-height:21.96px;text-align:right;font-size:14.2px;color:#1a1a1a;-webkit-text-stroke:0.05px #111"><span style="display:inline-block;transform:scaleX(0.8);transform-origin:100% 50%;letter-spacing:0.7px;margin-right:-0.7px">47%</span></div>
<div style="position:absolute;left:349.8px;top:571.8px;width:60.36px;height:19.96px;line-height:21.96px;text-align:right;font-size:14.2px;color:#1a1a1a;-webkit-text-stroke:0.05px #111"><span style="display:inline-block;transform:scaleX(0.8);transform-origin:100% 50%;letter-spacing:0.7px;margin-right:-0.7px">339</span></div>
<div style="position:absolute;left:413.76px;top:571.8px;width:60.36px;height:19.96px;line-height:21.96px;text-align:right;font-size:14.2px;color:#1a1a1a;-webkit-text-stroke:0.05px #111"><span style="display:inline-block;transform:scaleX(0.8);transform-origin:100% 50%;letter-spacing:0.7px;margin-right:-0.7px">41%</span></div>
<div style="position:absolute;left:349.8px;top:591.8px;width:60.36px;height:19.96px;line-height:21.96px;text-align:right;font-size:14.2px;color:#1a1a1a;-webkit-text-stroke:0.05px #111"><span style="display:inline-block;transform:scaleX(0.8);transform-origin:100% 50%;letter-spacing:0.7px;margin-right:-0.7px">250</span></div>
<div style="position:absolute;left:413.76px;top:591.8px;width:60.36px;height:19.96px;line-height:21.96px;text-align:right;font-size:14.2px;color:#1a1a1a;-webkit-text-stroke:0.05px #111"><span style="display:inline-block;transform:scaleX(0.8);transform-origin:100% 50%;letter-spacing:0.7px;margin-right:-0.7px">20%</span></div>
<div style="position:absolute;left:411.76px;top:229.3px;width:66.96000000000001px;height:22.96px;border:3.6px solid #111"></div>
<div style="position:absolute;left:474.72px;top:248.3px;width:6px;height:6px;background:#111;border:1px solid #fff"></div>
<div style="position:absolute;left:1260px;top:170.3px;width:16px;height:713.3px;background:linear-gradient(90deg,#e9ebee,#f3f4f6)"></div>
<div style="position:absolute;left:1261px;top:171.3px;width:14px;height:6px;background:#f4f5f7;border:1px solid #9aa2ac;border-radius:1px"></div>
<svg style="position:absolute;left:1263px;top:180.3px" width="10" height="8" viewBox="0 0 10 8"><path d="M1 6 L5 2 L9 6Z" fill="#333"/></svg>
<div style="position:absolute;left:1261.5px;top:195.70000000000002px;width:13.5px;height:649px;background:linear-gradient(90deg,#f4f5f7,#e6e9ec);border:1.5px solid #a3aab2;border-radius:2px"></div>
<div style="position:absolute;left:1263.1px;top:516.1px;width:7.4px;height:7.0px;background:#b3b8be"></div>
<svg style="position:absolute;left:1263px;top:869.6px" width="10" height="8" viewBox="0 0 10 8"><path d="M1 2 L5 6 L9 2Z" fill="#333"/></svg>
<div style="position:absolute;left:1276px;top:140px;width:4px;height:783px;background:linear-gradient(90deg,#c9cdd3,#8f959d)"></div>
<div style="position:absolute;left:0;top:140px;width:6px;height:783px;background:linear-gradient(90deg,#b3b9c1,#cdd2d8 40%,#d6dadf)"></div>
<div style="position:absolute;left:6px;top:883.6px;width:1270px;height:14.3px;background:linear-gradient(#f0f2f4,#dfe3e7);border-top:1px solid #b9bfc6"></div>
<svg style="position:absolute;left:6.6px;top:884.6px" width="57.8" height="13.4" viewBox="0 0 58 14"><rect x="1" y="1" width="56" height="12" fill="#e9ecef"/><path d="M6 3 L6 11 M13 3 L8 7 L13 11Z" stroke="#333" fill="#333" stroke-width="1.3"/><path d="M25 3 L20 7 L25 11Z" fill="#333"/><path d="M34 3 L39 7 L34 11Z" fill="#333"/><path d="M46 3 L51 7 L46 11Z M52 3 L52 11" stroke="#333" fill="#333" stroke-width="1.3"/></svg>
<svg style="position:absolute;left:0;top:0" width="1280" height="960"><path d="M132.1 883.6 L138.1 897.9 L181.9 897.9 L193.9 883.6" fill="#e7eaee" stroke="#9aa3ad" stroke-width="1"/></svg>
<svg style="position:absolute;left:0;top:0" width="1280" height="960"><path d="M189.9 883.6 L195.9 897.9 L241.7 897.9 L253.7 883.6" fill="#e7eaee" stroke="#9aa3ad" stroke-width="1"/></svg>
<svg style="position:absolute;left:0;top:0" width="1280" height="960"><path d="M247.7 883.6 L253.7 897.9 L274.8 897.9 L286.8 883.6" fill="#e7eaee" stroke="#9aa3ad" stroke-width="1"/></svg>
<svg style="position:absolute;left:0;top:0" width="1280" height="960"><path d="M67.1 883.6 L73.1 897.9 L125.1 897.9 L137.1 883.6" fill="#ffffff" stroke="#9aa3ad" stroke-width="1"/></svg>
<div style="position:absolute;left:76.8px;top:883.1px;line-height:15.839999999999998px;font-size:13.2px;color:#222;white-space:nowrap;font-weight:bold;">Sheet1</div>
<div style="position:absolute;left:137.5px;top:883.2px;line-height:15.6px;font-size:13px;color:#555;white-space:nowrap;">Sheet2</div>
<div style="position:absolute;left:198.2px;top:883.2px;line-height:15.6px;font-size:13px;color:#555;white-space:nowrap;">Sheet3</div>
<svg style="position:absolute;left:257.0px;top:884.0px" width="16.5" height="13.4" viewBox="0 0 16 13"><rect x="4" y="3" width="11" height="9" fill="#f3f4f6" stroke="#7f8892"/><path d="M3 0 L5 6 L1 3 L7 3 L2 6Z" fill="#e8b020"/></svg>
<div style="position:absolute;left:757.3px;top:884.0px;width:7.0px;height:14.0px;background:#f3f4f6;border:1px solid #8d959f;border-radius:1px"></div>
<svg style="position:absolute;left:767.3px;top:886.0px" width="8" height="10" viewBox="0 0 8 10"><path d="M6 1 L2 5 L6 9Z" fill="#333"/></svg>
<div style="position:absolute;left:781.2px;top:884.4px;width:431.7px;height:14.1px;background:linear-gradient(#fbfbfc,#e8ebee);border:1px solid #a9b0b9;border-radius:2px"></div>
<div style="position:absolute;left:994.1px;top:888.2px;width:8px;height:7px;border-left:1px solid #9aa;border-right:1px solid #9aa"></div>
<svg style="position:absolute;left:1241.3px;top:886.0px" width="8" height="10" viewBox="0 0 8 10"><path d="M2 1 L6 5 L2 9Z" fill="#333"/></svg>
<div style="position:absolute;left:1254.2px;top:884.0px;width:7.0px;height:14.0px;background:#f3f4f6;border:1px solid #8d959f;border-radius:1px"></div>
<div style="position:absolute;left:0;top:897.9px;width:1280px;height:23.3px;background:linear-gradient(#e9ecef,#d5d9de);border-top:1px solid #c3c8ce"></div>
<div style="position:absolute;left:12.4px;top:904.1px;line-height:13.68px;font-size:11.4px;color:#444;white-space:nowrap;">Ready</div>
<div style="position:absolute;left:52.6px;top:900.9px;width:1px;height:17.3px;background:#b4bac2"></div>
<svg style="position:absolute;left:59.9px;top:903.8px" width="17.5" height="14.5" viewBox="0 0 17 14"><rect x="1" y="2" width="15" height="11" fill="#f7f8fa" stroke="#6f7d92"/><rect x="1" y="2" width="15" height="3" fill="#4a78c0"/><circle cx="4" cy="3" r="2.5" fill="#d83a2a"/></svg>
<div style="position:absolute;left:86.7px;top:900.9px;width:1px;height:17.3px;background:#b4bac2"></div>
<div style="position:absolute;left:1023.6px;top:902.6px;width:19.0px;height:16.9px;background:linear-gradient(#fde9a8,#f6cd5a);border:1px solid #d9a93a"></div>
<svg style="position:absolute;left:1026.7px;top:904.9px" width="12.8" height="12.4" viewBox="0 0 13 12"><rect x="0.5" y="0.5" width="12" height="11" fill="none" stroke="#555"/><path d="M4.5 0 L4.5 12 M8.5 0 L8.5 12" stroke="#555"/></svg>
<svg style="position:absolute;left:1045.3px;top:903.8px" width="16.5" height="14.5" viewBox="0 0 16 14"><rect x="0.5" y="0.5" width="15" height="13" fill="#c8ccd1" stroke="#555"/><rect x="3.5" y="3" width="9" height="8" fill="#fff" stroke="#555"/></svg>
<svg style="position:absolute;left:1065.9px;top:903.8px" width="15.5" height="14.5" viewBox="0 0 15 14"><rect x="0.5" y="0.5" width="14" height="13" fill="#fff" stroke="#555"/><path d="M7.5 0 L7.5 14 M0 7 L15 7" stroke="#555" stroke-dasharray="2 1"/><path d="M4 0 L4 14 M11 0 L11 14" stroke="#777"/></svg>
<div style="position:absolute;left:1089.7px;top:903.9px;line-height:13.92px;font-size:11.6px;color:#444;white-space:nowrap;">100%</div>
<svg style="position:absolute;left:1124.4px;top:901.5px" width="18" height="18" viewBox="0 0 18 18"><circle cx="9" cy="9" r="7.5" fill="#f4f5f7" stroke="#7d858f" stroke-width="1.3"/><path d="M5 9 L13 9" stroke="#333" stroke-width="2"/></svg>
<div style="position:absolute;left:1141.7px;top:909.5px;width:99.1px;height:1.5px;background:#c3c8ce"></div>
<svg style="position:absolute;left:1186.2px;top:902.5px" width="10" height="16" viewBox="0 0 10 16"><path d="M1 1 L9 1 L9 11 L5 15 L1 11Z" fill="#f7f8fa" stroke="#7d858f"/></svg>
<svg style="position:absolute;left:1239.8px;top:901.5px" width="18" height="18" viewBox="0 0 18 18"><circle cx="9" cy="9" r="7.5" fill="#f4f5f7" stroke="#7d858f" stroke-width="1.3"/><path d="M5 9 L13 9 M9 5 L9 13" stroke="#333" stroke-width="2"/></svg>
<div style="position:absolute;left:0;top:921.2px;width:1280px;height:2.5px;background:#6d7fa6"></div>
<div style="position:absolute;left:0;top:923.7px;width:1280px;height:36.3px;background:linear-gradient(#3d83f5 0px,#2a68e6 3px,#245ddb 5px,#2258d6 60%,#2153cf 90%,#1c47b8)"></div>
<div style="position:absolute;left:0;top:923.7px;width:1280px;height:6.0px;background:linear-gradient(#5a95f2,#3f80ec)"></div>
<div style="position:absolute;left:0;top:929.7px;width:95.4px;height:30.3px;background:linear-gradient(#4fae4f,#3a9a3a 30%,#2f8b2f 80%,#2a7a2a);border-radius:0 14px 14px 0;box-shadow:inset -2px 0 3px rgba(0,60,0,.5)"></div>
<svg style="position:absolute;left:11.6px;top:933.8px" width="17.3" height="19.0" viewBox="0 0 16 20"><path d="M2 3 C4 1 6 1 8 3 L6 9 C4 7 2 7 0 9Z" fill="#f45a2a"/><path d="M9 3 C11 5 13 5 15 3 L13 9 C11 11 9 11 7 9Z" fill="#7ac142"/><path d="M0 10 C2 8 4 8 6 10 L4 16 C2 14 0 14 -2 16Z" fill="#2d8ce8"/><path d="M7 10 C9 12 11 12 13 10 L11 16 C9 18 7 18 5 16Z" fill="#f8c322"/></svg>
<div style="position:absolute;left:34.3px;top:934.0px;font-size:18.5px;line-height:22px;color:#f0fae8;font-weight:bold;font-style:italic;text-shadow:1px 1px 2px #1a4a1a">start</div>
<div style="position:absolute;left:119.1px;top:932.1px;width:15.3px;height:15.3px;background:#3aa53a;border:1.5px solid #e8f5e8;font-size:11px;line-height:12px;color:#fff;text-align:center;font-weight:bold">µ</div>
<svg style="position:absolute;left:142.0px;top:931.1px" width="16.1" height="17.8" viewBox="0 0 16 18"><path d="M3 10 L13 10 C13 5 9 3 7 4 C3 5 2 9 3 12 C4 15 8 16 12 14" fill="none" stroke="#5aaef5" stroke-width="3"/><path d="M1 16 C3 10 9 3 15 2" stroke="#f0f6ff" stroke-width="1.6" fill="none"/></svg>
<svg style="position:absolute;left:164.7px;top:931.5px" width="15.7" height="16.5" viewBox="0 0 16 16"><rect x="1" y="1" width="14" height="14" rx="3" fill="#e8f2ff" stroke="#6d98d8"/><circle cx="8" cy="8" r="4.5" fill="#5f8fd8"/><circle cx="8" cy="8" r="2" fill="#fff"/></svg>
<svg style="position:absolute;left:187.5px;top:931.1px" width="16.1" height="16.9" viewBox="0 0 16 16"><circle cx="8" cy="8" r="7" fill="#2a4a9a"/><path d="M8 1 C13 1 16 6 15 10 C14 14 10 15.5 7 15 C3 14 1 11 1 8 C3 11 6 12 8 11 C5 9 5 5 8 4 C6 3 5 2 8 1Z" fill="#ee7a1a"/></svg>
<svg style="position:absolute;left:209.8px;top:932.3px" width="16.5" height="14.9" viewBox="0 0 16 14"><path d="M1 3 L6 3 L7 1 L15 1 L15 13 L1 13Z" fill="#f3d37a" stroke="#b8902a"/><rect x="3" y="5" width="11" height="8" fill="#fff8dc"/></svg>
<div style="position:absolute;left:247.3px;top:932.5px;line-height:12.0px;font-size:10px;color:#cfe0ff;white-space:nowrap;">&raquo;</div>
<div style="position:absolute;left:272.1px;top:931.5px;width:156.9px;height:32.5px;background:linear-gradient(#4c8df5,#3a78ea 20%,#3370e3 80%,#2d63d6);border-radius:5px;border:1px solid #1d4fb8"></div>
<div style="position:absolute;left:282.8px;top:936.3px;width:14.5px;height:14.5px;border-radius:50%;background:conic-gradient(#db3a2a 0 120deg,#f6c628 120deg 240deg,#2aa55a 240deg);"><div style="position:absolute;left:4px;top:4px;width:6px;height:6px;border-radius:50%;background:#3a7ae0;border:1px solid #fff"></div></div>
<div style="position:absolute;left:301.0px;top:938.1px;line-height:13.2px;font-size:11px;color:#ffffff;white-space:nowrap;">Aula.bg - Question - ...</div>
<div style="position:absolute;left:430.5px;top:931.5px;width:162.0px;height:32.5px;background:linear-gradient(#1c46b5,#1e4dbf 15%,#2152c6 85%,#1d48b0);border-radius:5px;border:1px solid #173f9a;box-shadow:inset 1px 1px 2px rgba(0,0,40,.5)"></div>
<div style="position:absolute;left:442.6px;top:935.6px;width:14.9px;height:16.1px;background:linear-gradient(#dff2d0,#9dd07a);border:1px solid #2a6a2a;font-size:13px;line-height:14px;font-weight:bold;color:#1a6a1a;text-align:center">Z</div>
<div style="position:absolute;left:460.4px;top:938.3px;line-height:12.839999999999998px;font-size:10.7px;color:#ffffff;white-space:nowrap;">Microsoft Excel - Book1</div>
<div style="position:absolute;left:1178.8px;top:925.3px;width:101.2px;height:34.7px;background:linear-gradient(#22a2f4,#1190ea 25%,#0d88e2 80%,#0b7ad2);border-radius:14px 0 0 14px;box-shadow:inset 2px 1px 3px rgba(150,215,255,.6), -1px 0 1px rgba(0,40,120,.5)"></div>
<div style="position:absolute;left:1114.0px;top:938.2px;line-height:13.799999999999999px;font-size:11.5px;color:#e8f0ff;white-space:nowrap;">EN</div>
<div style="position:absolute;left:1140.9px;top:936.1px;width:11.6px;height:15.3px;background:#fafafa;border:1px solid #555;border-radius:1px;font-size:11px;line-height:14px;color:#222;text-align:center;font-weight:bold">?</div>
<svg style="position:absolute;left:1161.3px;top:934.0px" width="11.4" height="18.6" viewBox="0 0 11 18"><circle cx="5.5" cy="5" r="3.5" fill="none" stroke="#d8ecff" stroke-width="1.8"/><path d="M5.5 9 L5.5 12" stroke="#d8ecff" stroke-width="1.5"/><circle cx="5.5" cy="15.5" r="1.8" fill="#f4f9ff"/></svg>
<svg style="position:absolute;left:1179.3px;top:935.6px" width="15.7" height="16.1" viewBox="0 0 16 16"><circle cx="8" cy="8" r="7.5" fill="#3b8ee6"/><circle cx="8" cy="8" r="6" fill="#64b0f5"/><path d="M10 3.5 L5 8 L10 12.5" stroke="#fff" stroke-width="2.4" fill="none"/></svg>
<svg style="position:absolute;left:1198.2px;top:935.6px" width="16.5" height="16.1" viewBox="0 0 16 16"><circle cx="8" cy="8" r="7.5" fill="#c0600a"/><circle cx="8" cy="8" r="6" fill="#f3a21e"/><circle cx="8" cy="8.5" r="3" fill="#fff3c0"/></svg>
<svg style="position:absolute;left:1216.4px;top:934.4px" width="15.7" height="17.3" viewBox="0 0 15 17"><rect x="1" y="1" width="7" height="7" fill="#bfe0ff" stroke="#2a5aa0"/><rect x="6" y="8" width="8" height="8" fill="#bfe0ff" stroke="#2a5aa0"/><path d="M3 9 L3 12 L6 12" stroke="#e8f4ff" stroke-width="1.5" fill="none"/></svg>
<div style="position:absolute;left:1237.9px;top:937.9px;line-height:14.399999999999999px;font-size:12px;color:#eaf4ff;white-space:nowrap;">14:40</div>
<svg style="position:absolute;left:0;top:0" width="1280" height="960" viewBox="0 0 1280 960"><text x="649.3" y="244.9" font-size="41.3" font-family="Liberation Sans" textLength="170.3" lengthAdjust="spacingAndGlyphs" fill="#ad3f58" stroke="#fff" stroke-width="7" stroke-linejoin="round" style="paint-order:stroke">Резултатите</text><text x="649.3" y="244.9" font-size="41.3" font-family="Liberation Sans" textLength="170.3" lengthAdjust="spacingAndGlyphs" fill="none" stroke="#fff" stroke-width="0.25">Резултатите</text><text x="179.8" y="373.7" font-size="43.0" font-family="Liberation Sans" textLength="193.9" lengthAdjust="spacingAndGlyphs" fill="#ad3f58" stroke="#fff" stroke-width="7" stroke-linejoin="round" style="paint-order:stroke">Това е прагът</text><text x="179.8" y="373.7" font-size="43.0" font-family="Liberation Sans" textLength="193.9" lengthAdjust="spacingAndGlyphs" fill="none" stroke="#fff" stroke-width="0.25">Това е прагът</text><text x="65.2" y="234.9" font-size="42.8" font-family="Liberation Sans" textLength="160.2" lengthAdjust="spacingAndGlyphs" fill="#ad3f58" stroke="#fff" stroke-width="7" stroke-linejoin="round" style="paint-order:stroke">Формулата</text><text x="65.2" y="234.9" font-size="42.8" font-family="Liberation Sans" textLength="160.2" lengthAdjust="spacingAndGlyphs" fill="none" stroke="#fff" stroke-width="0.25">Формулата</text><line x1="227.5" y1="239.5" x2="267.0" y2="186.5" stroke="#ad3f58" stroke-width="6.2"/><path d="M280.6,168.3 L272.6,198.3 L265.1,188.9 L254.0,184.5Z" fill="#ad3f58"/><line x1="272.9" y1="293.9" x2="301.9" y2="264.8" stroke="#ad3f58" stroke-width="6.2"/><path d="M317.9,248.8 L305.7,277.4 L299.7,267.0 L289.3,261.0Z" fill="#ad3f58"/><line x1="585.6" y1="224.3" x2="519.8" y2="237.3" stroke="#ad3f58" stroke-width="6.2"/><path d="M497.5,241.8 L523.7,224.8 L522.9,236.7 L528.1,247.5Z" fill="#ad3f58"/><circle cx="216.4" cy="254.3" r="16.9" fill="#fff" stroke="#ad3f58" stroke-width="6.6"/><text transform="translate(215.7,260.5) scale(0.62,1)" x="0" y="0" font-size="20.6" fill="#8a6070" text-anchor="middle" font-family="Liberation Sans">1</text><circle cx="259.7" cy="307.0" r="16.9" fill="#fff" stroke="#ad3f58" stroke-width="6.6"/><text transform="translate(258.7,313.8) scale(0.62,1)" x="0" y="0" font-size="20.6" fill="#8a6070" text-anchor="middle" font-family="Liberation Sans">2</text><circle cx="603.9" cy="220.7" r="16.9" fill="#fff" stroke="#ad3f58" stroke-width="6.6"/><text transform="translate(603.0,228.1) scale(0.62,1)" x="0" y="0" font-size="20.6" fill="#8a6070" text-anchor="middle" font-family="Liberation Sans">3</text></svg>
</div></body></html>
